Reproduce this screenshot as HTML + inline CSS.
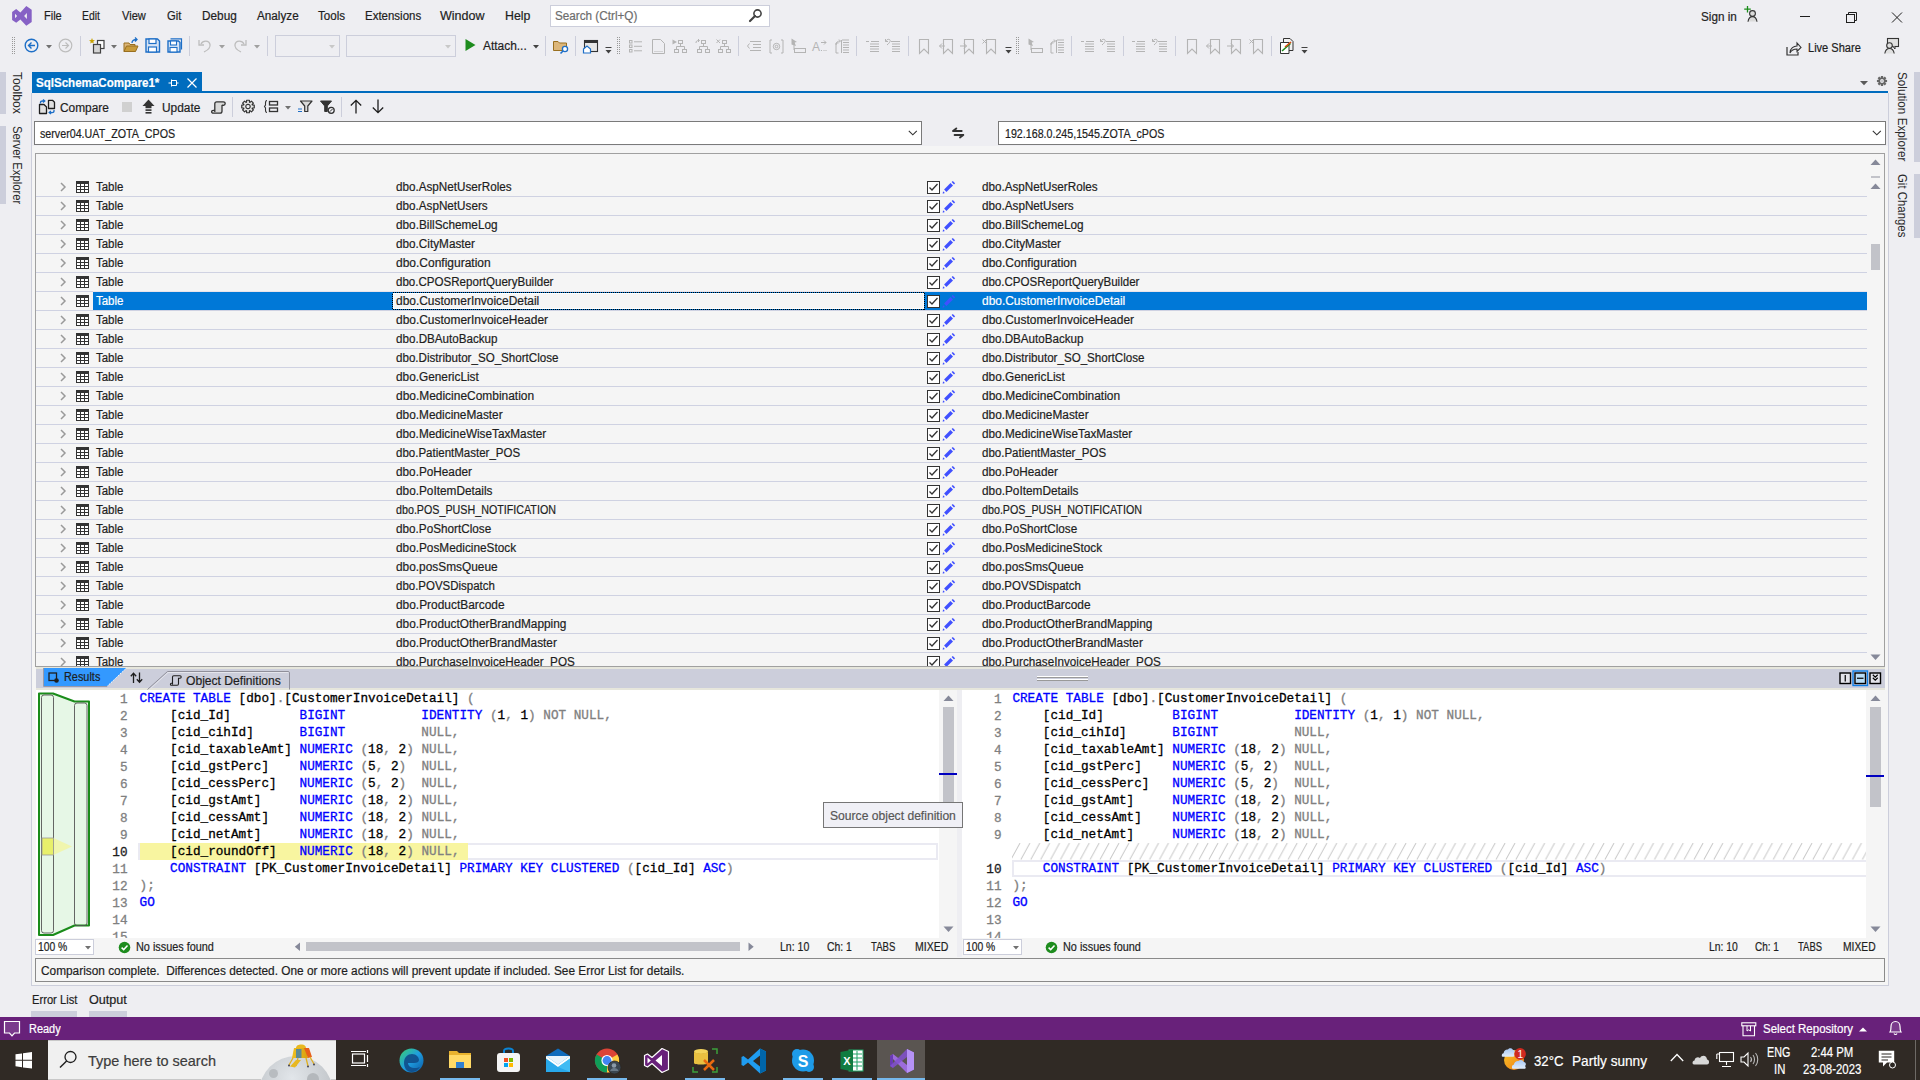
<!DOCTYPE html><html><head><meta charset="utf-8"><style>
*{margin:0;padding:0}
html,body{width:1920px;height:1080px;overflow:hidden;background:#EEEEF2}
body{position:relative;font-family:'Liberation Sans',sans-serif;font-size:12px;color:#1E1E1E}
.a{position:absolute}
.t{position:absolute;white-space:pre;font-size:12px;line-height:20px;-webkit-text-stroke:0.2px currentColor}
.c{-webkit-text-stroke:0.3px currentColor;position:absolute;white-space:pre;font-family:'Liberation Mono',monospace;font-size:12.695px;line-height:17px;height:17px}
svg{overflow:visible}
</style></head><body>
<svg class="a" style="left:8px;top:2px;" width="30" height="28" viewBox="0 0 30 28"><path fill="#8661C5" d="M18.3 3.9 L23.7 7.8 L23.7 20 L18.3 23.7 L12.4 17.6 L8.2 20.7 L4.1 17.9 L4.1 10.1 L8.2 7 L12.4 10.4 Z M7 11.7 L7 16.2 L9.1 14.1 Z M18.9 11 L16.1 14.1 L18.9 17 Z"/></svg>
<div class="t" style="left:44.1px;top:6px;font-size:12px;line-height:20px;color:#1E1E1E;font-family:'Liberation Sans',sans-serif;transform-origin:0 0;transform:scaleX(0.9166);">File</div>
<div class="t" style="left:82.2px;top:6px;font-size:12px;line-height:20px;color:#1E1E1E;font-family:'Liberation Sans',sans-serif;transform-origin:0 0;transform:scaleX(0.8658);">Edit</div>
<div class="t" style="left:121.5px;top:6px;font-size:12px;line-height:20px;color:#1E1E1E;font-family:'Liberation Sans',sans-serif;transform-origin:0 0;transform:scaleX(0.9239);">View</div>
<div class="t" style="left:166.9px;top:6px;font-size:12px;line-height:20px;color:#1E1E1E;font-family:'Liberation Sans',sans-serif;transform-origin:0 0;transform:scaleX(0.9343);">Git</div>
<div class="t" style="left:201.5px;top:6px;font-size:12px;line-height:20px;color:#1E1E1E;font-family:'Liberation Sans',sans-serif;transform-origin:0 0;transform:scaleX(0.9824);">Debug</div>
<div class="t" style="left:256.5px;top:6px;font-size:12px;line-height:20px;color:#1E1E1E;font-family:'Liberation Sans',sans-serif;transform-origin:0 0;transform:scaleX(0.9754);">Analyze</div>
<div class="t" style="left:317.8px;top:6px;font-size:12px;line-height:20px;color:#1E1E1E;font-family:'Liberation Sans',sans-serif;transform-origin:0 0;transform:scaleX(0.9654);">Tools</div>
<div class="t" style="left:364.5px;top:6px;font-size:12px;line-height:20px;color:#1E1E1E;font-family:'Liberation Sans',sans-serif;transform-origin:0 0;transform:scaleX(0.9564);">Extensions</div>
<div class="t" style="left:440.3px;top:6px;font-size:12px;line-height:20px;color:#1E1E1E;font-family:'Liberation Sans',sans-serif;transform-origin:0 0;transform:scaleX(1.0442);">Window</div>
<div class="t" style="left:504.5px;top:6px;font-size:12px;line-height:20px;color:#1E1E1E;font-family:'Liberation Sans',sans-serif;transform-origin:0 0;transform:scaleX(1.0276);">Help</div>
<div class="a" style="left:550px;top:5px;width:220px;height:22px;background:#FFFFFF;border:1px solid #CCCEDB;box-sizing:border-box;"></div>
<div class="t" style="left:555px;top:6px;font-size:12px;line-height:20px;color:#6D6D6D;font-family:'Liberation Sans',sans-serif;transform-origin:0 0;transform:scaleX(0.9762);">Search (Ctrl+Q)</div>
<svg class="a" style="left:748px;top:8px;" width="16" height="15" viewBox="0 0 16 15"><circle cx="9.5" cy="5.5" r="3.6" fill="none" stroke="#424242" stroke-width="1.6"/><line x1="7" y1="8" x2="2" y2="13" stroke="#424242" stroke-width="2.2" stroke-linecap="round"/></svg>
<div class="t" style="left:1701px;top:7px;font-size:12px;line-height:20px;color:#1E1E1E;font-family:'Liberation Sans',sans-serif;transform-origin:0 0;transform:scaleX(0.9768);">Sign in</div>
<svg class="a" style="left:1742px;top:6px;" width="18" height="18" viewBox="0 0 18 18"><path d="M6 15.5 C6.5 11.5 8.5 10.5 10.5 10.5 C12.5 10.5 14.5 11.5 15 15.5 Z" fill="#DADADA"/><circle cx="10.5" cy="7.5" r="2.9" fill="#DADADA" stroke="#333" stroke-width="1.1"/><path d="M6 15.8 C6.5 11.8 8.5 10.6 10.5 10.6 C12.5 10.6 14.5 11.8 15 15.8" fill="none" stroke="#333" stroke-width="1.1"/><path d="M5.5 0 V6.5 M2.2 3.2 H8.8" stroke="#1A8C1A" stroke-width="1.3"/></svg>
<div class="a" style="left:1800px;top:16px;width:10px;height:1px;background:#1E1E1E;"></div>
<svg class="a" style="left:1844px;top:10px;" width="14" height="14" viewBox="0 0 14 14"><rect x="2.5" y="4.5" width="8" height="8" fill="none" stroke="#1E1E1E"/><path d="M4.5 4.5 V2.5 H12.5 V10.5 H10.5" fill="none" stroke="#1E1E1E"/></svg>
<svg class="a" style="left:1890px;top:11px;" width="14" height="13" viewBox="0 0 14 13"><path d="M2 1.5 L12 11.5 M12 1.5 L2 11.5" stroke="#1E1E1E" stroke-width="1"/></svg>
<svg class="a" style="left:12px;top:37px;" width="4" height="17" viewBox="0 0 4 17"><rect x="0" y="0" width="1" height="1" fill="#999"/><rect x="2" y="0" width="1" height="1" fill="#999"/><rect x="0" y="2" width="1" height="1" fill="#999"/><rect x="2" y="2" width="1" height="1" fill="#999"/><rect x="0" y="4" width="1" height="1" fill="#999"/><rect x="2" y="4" width="1" height="1" fill="#999"/><rect x="0" y="6" width="1" height="1" fill="#999"/><rect x="2" y="6" width="1" height="1" fill="#999"/><rect x="0" y="8" width="1" height="1" fill="#999"/><rect x="2" y="8" width="1" height="1" fill="#999"/><rect x="0" y="10" width="1" height="1" fill="#999"/><rect x="2" y="10" width="1" height="1" fill="#999"/><rect x="0" y="12" width="1" height="1" fill="#999"/><rect x="2" y="12" width="1" height="1" fill="#999"/><rect x="0" y="14" width="1" height="1" fill="#999"/><rect x="2" y="14" width="1" height="1" fill="#999"/><rect x="0" y="16" width="1" height="1" fill="#999"/><rect x="2" y="16" width="1" height="1" fill="#999"/></svg>
<svg class="a" style="left:24px;top:38px;" width="15" height="15" viewBox="0 0 15 15"><circle cx="7.5" cy="7.5" r="6.3" fill="none" stroke="#1E6FC7" stroke-width="1.4"/><path d="M11 7.5 H4.5 M7.5 4.5 L4.5 7.5 L7.5 10.5" fill="none" stroke="#1E6FC7" stroke-width="1.4"/></svg>
<svg class="a" style="left:46px;top:45px;" width="7" height="4" viewBox="0 0 7 4"><path d="M0 0 H6 L3 3.5 Z" fill="#717171"/></svg>
<svg class="a" style="left:58px;top:38px;" width="15" height="15" viewBox="0 0 15 15"><circle cx="7.5" cy="7.5" r="6.3" fill="none" stroke="#BDBDBD" stroke-width="1.2"/><path d="M4 7.5 H10.5 M7.5 4.5 L10.5 7.5 L7.5 10.5" fill="none" stroke="#BDBDBD" stroke-width="1.2"/></svg>
<div class="a" style="left:80px;top:36px;width:1px;height:20px;background:#CCCEDB;"></div>
<svg class="a" style="left:88px;top:37px;" width="18" height="18" viewBox="0 0 18 18"><path d="M4 1 L4.8 3 L7 3.2 L5.3 4.5 L5.8 6.5 L4 5.4 L2.2 6.5 L2.7 4.5 L1 3.2 L3.2 3 Z" fill="#C8A200"/><rect x="9.5" y="3.5" width="6.5" height="8" fill="#FFF" stroke="#424242" stroke-width="1.2"/><rect x="5.5" y="7.5" width="7" height="8.5" fill="#D4D4D4" stroke="#424242" stroke-width="1.2"/></svg>
<svg class="a" style="left:111px;top:45px;" width="7" height="4" viewBox="0 0 7 4"><path d="M0 0 H6 L3 3.5 Z" fill="#717171"/></svg>
<svg class="a" style="left:123px;top:37px;" width="17" height="16" viewBox="0 0 17 16"><path d="M1 6 H6 L7 7.5 H12 V14.5 H1 Z" fill="#DCB67A" stroke="#996F1F" stroke-width="1"/><path d="M1 14.5 L3.5 9 H15 L12.5 14.5 Z" fill="#C89B3C" stroke="#996F1F"/><path d="M9 6 C9 3.5 11 2.5 13.5 2.5 M12 0.5 L14 2.5 L12 4.5" fill="none" stroke="#1E6FC7" stroke-width="1.3"/></svg>
<svg class="a" style="left:145px;top:38px;" width="16" height="15" viewBox="0 0 16 15"><path d="M1 1 H12.5 L14.5 3 V14 H1 Z" fill="#D6E4F5" stroke="#1E6FC7" stroke-width="1.4"/><rect x="4" y="1" width="7" height="4.5" fill="#FFF" stroke="#1E6FC7" stroke-width="1.2"/><rect x="3.5" y="9" width="8" height="5" fill="#FFF" stroke="#1E6FC7" stroke-width="1.2"/></svg>
<svg class="a" style="left:167px;top:38px;" width="16" height="15" viewBox="0 0 16 15"><path d="M3.5 0.8 H14.5 V11.5" fill="none" stroke="#1E6FC7" stroke-width="1.2"/><path d="M1 3 H11.5 L13 4.5 V14 H1 Z" fill="#D6E4F5" stroke="#1E6FC7" stroke-width="1.4"/><rect x="3.5" y="3" width="6" height="4" fill="#FFF" stroke="#1E6FC7" stroke-width="1.1"/><rect x="3" y="9.5" width="7" height="4.5" fill="#FFF" stroke="#1E6FC7" stroke-width="1.1"/></svg>
<div class="a" style="left:189px;top:36px;width:1px;height:20px;background:#CCCEDB;"></div>
<svg class="a" style="left:198px;top:38px;" width="14" height="15" viewBox="0 0 14 15"><path d="M3 6 C5 2 11 2 12 6.5 C12.5 9 10 12 6 14" fill="none" stroke="#BDBDBD" stroke-width="1.3"/><path d="M1 2 V7 H6" fill="none" stroke="#BDBDBD" stroke-width="1.3"/></svg>
<svg class="a" style="left:219px;top:45px;" width="7" height="4" viewBox="0 0 7 4"><path d="M0 0 H6 L3 3.5 Z" fill="#A0A0A0"/></svg>
<svg class="a" style="left:233px;top:38px;" width="14" height="15" viewBox="0 0 14 15"><path d="M11 6 C9 2 3 2 2 6.5 C1.5 9 4 12 8 14" fill="none" stroke="#BDBDBD" stroke-width="1.3"/><path d="M13 2 V7 H8" fill="none" stroke="#BDBDBD" stroke-width="1.3"/></svg>
<svg class="a" style="left:254px;top:45px;" width="7" height="4" viewBox="0 0 7 4"><path d="M0 0 H6 L3 3.5 Z" fill="#A0A0A0"/></svg>
<div class="a" style="left:267px;top:36px;width:1px;height:20px;background:#CCCEDB;"></div>
<div class="a" style="left:275px;top:35px;width:65px;height:22px;border:1px solid #CCCEDB;box-sizing:border-box;"></div>
<svg class="a" style="left:329px;top:45px;" width="7" height="4" viewBox="0 0 7 4"><path d="M0 0 H6 L3 3.5 Z" fill="#C8C8C8"/></svg>
<div class="a" style="left:346px;top:35px;width:110px;height:22px;border:1px solid #CCCEDB;box-sizing:border-box;"></div>
<svg class="a" style="left:445px;top:45px;" width="7" height="4" viewBox="0 0 7 4"><path d="M0 0 H6 L3 3.5 Z" fill="#C8C8C8"/></svg>
<svg class="a" style="left:465px;top:38px;" width="11" height="14" viewBox="0 0 11 14"><path d="M0.5 1 L10.5 7 L0.5 13 Z" fill="#1E8C1E"/></svg>
<div class="t" style="left:483px;top:36px;font-size:12px;line-height:20px;color:#1E1E1E;font-family:'Liberation Sans',sans-serif;transform-origin:0 0;transform:scaleX(0.9938);">Attach...</div>
<svg class="a" style="left:533px;top:45px;" width="7" height="4" viewBox="0 0 7 4"><path d="M0 0 H6 L3 3.5 Z" fill="#424242"/></svg>
<div class="a" style="left:545px;top:36px;width:1px;height:20px;background:#CCCEDB;"></div>
<svg class="a" style="left:553px;top:39px;" width="17" height="15" viewBox="0 0 17 15"><path d="M0.5 2.5 H5 L6.5 4 H13.5 V11.5 H0.5 Z" fill="#DCB67A" stroke="#996F1F"/><circle cx="12" cy="10" r="2.6" fill="#FFF" stroke="#1E6FC7" stroke-width="1.3"/><path d="M10 12 L7.5 14.5" stroke="#1E6FC7" stroke-width="1.6"/></svg>
<div class="a" style="left:575px;top:36px;width:1px;height:20px;background:#CCCEDB;"></div>
<svg class="a" style="left:583px;top:39px;" width="16" height="15" viewBox="0 0 16 15"><rect x="1.5" y="1.5" width="13" height="11" fill="#E6E6E6" stroke="#333" stroke-width="1.1"/><rect x="1.5" y="1.5" width="13" height="2.5" fill="#333"/><path d="M0.5 10 L4 7 L7.5 10 V14 H0.5 Z" fill="#FFF" stroke="#1E6FC7" stroke-width="1.2"/></svg>
<svg class="a" style="left:605px;top:47px;" width="8" height="8" viewBox="0 0 8 8"><rect x="0.5" y="0" width="6" height="1" fill="#424242"/><path d="M0.5 3 H6.5 L3.5 6.5 Z" fill="#424242"/></svg>
<svg class="a" style="left:617px;top:37px;" width="4" height="17" viewBox="0 0 4 17"><rect x="0" y="0" width="1" height="1" fill="#999"/><rect x="2" y="0" width="1" height="1" fill="#999"/><rect x="0" y="2" width="1" height="1" fill="#999"/><rect x="2" y="2" width="1" height="1" fill="#999"/><rect x="0" y="4" width="1" height="1" fill="#999"/><rect x="2" y="4" width="1" height="1" fill="#999"/><rect x="0" y="6" width="1" height="1" fill="#999"/><rect x="2" y="6" width="1" height="1" fill="#999"/><rect x="0" y="8" width="1" height="1" fill="#999"/><rect x="2" y="8" width="1" height="1" fill="#999"/><rect x="0" y="10" width="1" height="1" fill="#999"/><rect x="2" y="10" width="1" height="1" fill="#999"/><rect x="0" y="12" width="1" height="1" fill="#999"/><rect x="2" y="12" width="1" height="1" fill="#999"/><rect x="0" y="14" width="1" height="1" fill="#999"/><rect x="2" y="14" width="1" height="1" fill="#999"/><rect x="0" y="16" width="1" height="1" fill="#999"/><rect x="2" y="16" width="1" height="1" fill="#999"/></svg>
<svg class="a" style="left:629px;top:40px;" width="14" height="13" viewBox="0 0 14 13"><g fill="none" stroke="#B4B4B4" stroke-width="1"><rect x="0.5" y="0.5" width="2.5" height="2.5"/><rect x="0.5" y="5" width="2.5" height="2.5"/><rect x="0.5" y="9.5" width="2.5" height="2.5"/><path d="M5 1.8 H13 M5 6.3 H13 M5 10.8 H13"/></g></svg>
<svg class="a" style="left:652px;top:39px;" width="13" height="15" viewBox="0 0 13 15"><path d="M0.5 0.5 H8.5 L12.5 4.5 V14.5 H0.5 Z" fill="none" stroke="#B4B4B4"/><path d="M2.5 12.5 H11" stroke="#B4B4B4" stroke-dasharray="1 1"/></svg>
<svg class="a" style="left:672px;top:39px;" width="17" height="15" viewBox="0 0 17 15"><path d="M0.5 0.5 L5 3 L0.5 5.5 Z" fill="#B4B4B4"/><g fill="none" stroke="#B4B4B4"><rect x="6.5" y="1.5" width="4" height="3"/><rect x="2.5" y="10.5" width="4" height="3"/><rect x="10.5" y="10.5" width="4" height="3"/><path d="M8.5 4.5 V7.5 M4.5 10.5 V7.5 H12.5 V10.5"/></g></svg>
<svg class="a" style="left:695px;top:39px;" width="17" height="15" viewBox="0 0 17 15"><path d="M1 4 C1 2 2 1.5 4 1.5 M3 0 L4.5 1.5 L3 3" fill="none" stroke="#B4B4B4"/><g fill="none" stroke="#B4B4B4"><rect x="6.5" y="1.5" width="4" height="3"/><rect x="2.5" y="10.5" width="4" height="3"/><rect x="10.5" y="10.5" width="4" height="3"/><path d="M8.5 4.5 V7.5 M4.5 10.5 V7.5 H12.5 V10.5"/></g></svg>
<svg class="a" style="left:716px;top:39px;" width="17" height="15" viewBox="0 0 17 15"><path d="M0.5 0.5 L4 4 M4 0.5 L0.5 4" stroke="#B4B4B4"/><g fill="none" stroke="#B4B4B4"><rect x="6.5" y="1.5" width="4" height="3"/><rect x="2.5" y="10.5" width="4" height="3"/><rect x="10.5" y="10.5" width="4" height="3"/><path d="M8.5 4.5 V7.5 M4.5 10.5 V7.5 H12.5 V10.5"/></g></svg>
<div class="a" style="left:738px;top:36px;width:1px;height:20px;background:#CCCEDB;"></div>
<svg class="a" style="left:747px;top:40px;" width="15" height="13" viewBox="0 0 15 13"><g fill="none" stroke="#B4B4B4"><path d="M3 1.5 H14 M6 4.5 H14 M6 7.5 H14 M3 10.5 H14 M2.5 3.5 L0.5 6 L2.5 8.5"/></g></svg>
<svg class="a" style="left:769px;top:39px;" width="15" height="15" viewBox="0 0 15 15"><g fill="none" stroke="#B4B4B4"><path d="M3 1 H1 V14 H3 M12 1 H14 V14 H12"/><circle cx="7.5" cy="7.5" r="3.2"/><circle cx="7.5" cy="7.5" r="1.3"/></g></svg>
<svg class="a" style="left:791px;top:38px;" width="16" height="16" viewBox="0 0 16 16"><path d="M0.5 0.5 L6 4 L3.5 4.5 L5 8 L0.5 6.5 Z" fill="#B4B4B4"/><rect x="3.5" y="10.5" width="11" height="4" fill="none" stroke="#B4B4B4"/><path d="M3 4 V12" stroke="#B4B4B4"/></svg>
<svg class="a" style="left:812px;top:39px;" width="15" height="15" viewBox="0 0 15 15"><text x="0" y="12" font-family="Liberation Sans" font-size="12" fill="#B4B4B4">A</text><path d="M9 3.5 H14 M12 1.5 L14 3.5 L12 5.5 M9 11.5 H10 M11.5 11.5 H12.5 M13.5 11.5 H14.5" fill="none" stroke="#B4B4B4"/></svg>
<svg class="a" style="left:835px;top:39px;" width="15" height="15" viewBox="0 0 15 15"><g fill="none" stroke="#B4B4B4"><path d="M3.5 14 H1 V4 H3.5"/><path d="M1 6 C1 3 3 2 5 2 M4 0.5 L5.5 2 L4 3.5"/><path d="M7 1 H14 M8 3.5 H14 M8 6 H14 M8 8.5 H14 M8 11 H14 M8 13.5 H14 M6.5 1 V14"/></g></svg>
<div class="a" style="left:856px;top:36px;width:1px;height:20px;background:#CCCEDB;"></div>
<svg class="a" style="left:866px;top:39px;" width="14" height="15" viewBox="0 0 14 15"><g fill="none" stroke="#B4B4B4"><path d="M0 2.5 H3 M4 5 H13 M4 7.5 H13 M4 10 H13 M4 12.5 H13 M5 2.5 H13"/></g></svg>
<svg class="a" style="left:885px;top:38px;" width="16" height="16" viewBox="0 0 16 16"><g fill="none" stroke="#B4B4B4"><path d="M6 3.5 H15 M7 6 H15 M7 8.5 H15 M7 11 H15 M7 13.5 H15"/><path d="M1 4 C1 1.5 3 1 4.5 1.5 C6 2.5 5 4.5 2 7 M0.5 1 V3.5 H3"/></g></svg>
<div class="a" style="left:908px;top:36px;width:1px;height:20px;background:#CCCEDB;"></div>
<svg class="a" style="left:918px;top:39px;" width="15" height="15" viewBox="0 0 15 15"><path d="M1.5 0.5 H10.5 V14.5 L6 10 L1.5 14.5 Z" fill="none" stroke="#B4B4B4" stroke-width="1.1"/></svg>
<svg class="a" style="left:939px;top:39px;" width="15" height="15" viewBox="0 0 15 15"><path d="M0.5 7 H6 M0.5 7 L3 4.5 M0.5 7 L3 9.5" fill="none" stroke="#B4B4B4"/><path d="M4.5 0.5 H13.5 V14.5 L9 10 L4.5 14.5 Z" fill="none" stroke="#B4B4B4" stroke-width="1.1"/></svg>
<svg class="a" style="left:960px;top:39px;" width="15" height="15" viewBox="0 0 15 15"><path d="M0 7 H6.5 M6.5 7 L4 4.5 M6.5 7 L4 9.5" fill="none" stroke="#B4B4B4"/><path d="M4.5 0.5 H13.5 V14.5 L9 10 L4.5 14.5 Z" fill="none" stroke="#B4B4B4" stroke-width="1.1"/></svg>
<svg class="a" style="left:982px;top:39px;" width="15" height="15" viewBox="0 0 15 15"><path d="M0.5 0.5 L4.5 4.5 M4.5 0.5 L0.5 4.5" fill="none" stroke="#B4B4B4"/><path d="M4.5 0.5 H13.5 V14.5 L9 10 L4.5 14.5 Z" fill="none" stroke="#B4B4B4" stroke-width="1.1"/></svg>
<svg class="a" style="left:1005px;top:47px;" width="8" height="8" viewBox="0 0 8 8"><rect x="0.5" y="0" width="6" height="1" fill="#424242"/><path d="M0.5 3 H6.5 L3.5 6.5 Z" fill="#424242"/></svg>
<svg class="a" style="left:1016px;top:37px;" width="4" height="17" viewBox="0 0 4 17"><rect x="0" y="0" width="1" height="1" fill="#999"/><rect x="2" y="0" width="1" height="1" fill="#999"/><rect x="0" y="2" width="1" height="1" fill="#999"/><rect x="2" y="2" width="1" height="1" fill="#999"/><rect x="0" y="4" width="1" height="1" fill="#999"/><rect x="2" y="4" width="1" height="1" fill="#999"/><rect x="0" y="6" width="1" height="1" fill="#999"/><rect x="2" y="6" width="1" height="1" fill="#999"/><rect x="0" y="8" width="1" height="1" fill="#999"/><rect x="2" y="8" width="1" height="1" fill="#999"/><rect x="0" y="10" width="1" height="1" fill="#999"/><rect x="2" y="10" width="1" height="1" fill="#999"/><rect x="0" y="12" width="1" height="1" fill="#999"/><rect x="2" y="12" width="1" height="1" fill="#999"/><rect x="0" y="14" width="1" height="1" fill="#999"/><rect x="2" y="14" width="1" height="1" fill="#999"/><rect x="0" y="16" width="1" height="1" fill="#999"/><rect x="2" y="16" width="1" height="1" fill="#999"/></svg>
<svg class="a" style="left:1028px;top:38px;" width="16" height="16" viewBox="0 0 16 16"><path d="M0.5 0.5 L6 4 L3.5 4.5 L5 8 L0.5 6.5 Z" fill="#B4B4B4"/><rect x="3.5" y="10.5" width="11" height="4" fill="none" stroke="#B4B4B4"/><path d="M3 4 V12" stroke="#B4B4B4"/></svg>
<svg class="a" style="left:1050px;top:39px;" width="15" height="15" viewBox="0 0 15 15"><g fill="none" stroke="#B4B4B4"><path d="M3.5 14 H1 V4 H3.5"/><path d="M1 6 C1 3 3 2 5 2 M4 0.5 L5.5 2 L4 3.5"/><path d="M7 1 H14 M8 3.5 H14 M8 6 H14 M8 8.5 H14 M8 11 H14 M8 13.5 H14 M6.5 1 V14"/></g></svg>
<div class="a" style="left:1071px;top:36px;width:1px;height:20px;background:#CCCEDB;"></div>
<svg class="a" style="left:1081px;top:39px;" width="14" height="15" viewBox="0 0 14 15"><g fill="none" stroke="#B4B4B4"><path d="M0 2.5 H3 M4 5 H13 M4 7.5 H13 M4 10 H13 M4 12.5 H13 M5 2.5 H13"/></g></svg>
<svg class="a" style="left:1100px;top:38px;" width="16" height="16" viewBox="0 0 16 16"><g fill="none" stroke="#B4B4B4"><path d="M6 3.5 H15 M7 6 H15 M7 8.5 H15 M7 11 H15 M7 13.5 H15"/><path d="M1 4 C1 1.5 3 1 4.5 1.5 C6 2.5 5 4.5 2 7 M0.5 1 V3.5 H3"/></g></svg>
<div class="a" style="left:1123px;top:36px;width:1px;height:20px;background:#CCCEDB;"></div>
<svg class="a" style="left:1132px;top:39px;" width="14" height="15" viewBox="0 0 14 15"><g fill="none" stroke="#B4B4B4"><path d="M0 2.5 H3 M4 5 H13 M4 7.5 H13 M4 10 H13 M4 12.5 H13 M5 2.5 H13"/></g></svg>
<svg class="a" style="left:1152px;top:38px;" width="16" height="16" viewBox="0 0 16 16"><g fill="none" stroke="#B4B4B4"><path d="M6 3.5 H15 M7 6 H15 M7 8.5 H15 M7 11 H15 M7 13.5 H15"/><path d="M1 4 C1 1.5 3 1 4.5 1.5 C6 2.5 5 4.5 2 7 M0.5 1 V3.5 H3"/></g></svg>
<div class="a" style="left:1175px;top:36px;width:1px;height:20px;background:#CCCEDB;"></div>
<svg class="a" style="left:1186px;top:39px;" width="15" height="15" viewBox="0 0 15 15"><path d="M1.5 0.5 H10.5 V14.5 L6 10 L1.5 14.5 Z" fill="none" stroke="#B4B4B4" stroke-width="1.1"/></svg>
<svg class="a" style="left:1206px;top:39px;" width="15" height="15" viewBox="0 0 15 15"><path d="M0.5 7 H6 M0.5 7 L3 4.5 M0.5 7 L3 9.5" fill="none" stroke="#B4B4B4"/><path d="M4.5 0.5 H13.5 V14.5 L9 10 L4.5 14.5 Z" fill="none" stroke="#B4B4B4" stroke-width="1.1"/></svg>
<svg class="a" style="left:1227px;top:39px;" width="15" height="15" viewBox="0 0 15 15"><path d="M0 7 H6.5 M6.5 7 L4 4.5 M6.5 7 L4 9.5" fill="none" stroke="#B4B4B4"/><path d="M4.5 0.5 H13.5 V14.5 L9 10 L4.5 14.5 Z" fill="none" stroke="#B4B4B4" stroke-width="1.1"/></svg>
<svg class="a" style="left:1249px;top:39px;" width="15" height="15" viewBox="0 0 15 15"><path d="M0.5 0.5 L4.5 4.5 M4.5 0.5 L0.5 4.5" fill="none" stroke="#B4B4B4"/><path d="M4.5 0.5 H13.5 V14.5 L9 10 L4.5 14.5 Z" fill="none" stroke="#B4B4B4" stroke-width="1.1"/></svg>
<div class="a" style="left:1271px;top:36px;width:1px;height:20px;background:#CCCEDB;"></div>
<svg class="a" style="left:1280px;top:38px;" width="14" height="16" viewBox="0 0 14 16"><path d="M3.5 0.5 H10 L13 3.5 V12.5 H3.5 Z" fill="#F0F0F0" stroke="#333"/><path d="M0.5 4.5 H9 V15.5 H0.5 Z" fill="#FFF" stroke="#333"/><path d="M2 13 L10.5 5.5" stroke="#1E8C1E" stroke-width="1.6"/><path d="M5 9 L11 4" stroke="#D9480F" stroke-width="1.6"/></svg>
<svg class="a" style="left:1301px;top:47px;" width="8" height="8" viewBox="0 0 8 8"><rect x="0.5" y="0" width="6" height="1" fill="#424242"/><path d="M0.5 3 H6.5 L3.5 6.5 Z" fill="#424242"/></svg>
<svg class="a" style="left:1786px;top:41px;" width="16" height="15" viewBox="0 0 16 15"><path d="M1 6 V14 H12 V11" fill="none" stroke="#333" stroke-width="1.2"/><path d="M4 12 C4 7 8 5 11 5 V2 L15 6.5 L11 10.5 V8 C8 8 5.5 9 4 12 Z" fill="none" stroke="#333" stroke-width="1.1"/></svg>
<div class="t" style="left:1807.5px;top:38px;font-size:12px;line-height:20px;color:#1E1E1E;font-family:'Liberation Sans',sans-serif;transform-origin:0 0;transform:scaleX(0.9208);">Live Share</div>
<svg class="a" style="left:1884px;top:38px;" width="16" height="17" viewBox="0 0 16 17"><rect x="3.5" y="0.5" width="11" height="8" fill="#E0E0E0" stroke="#333" stroke-width="1.1"/><path d="M9 8.5 L11 11 V8.5" fill="#E0E0E0" stroke="#333"/><circle cx="5.5" cy="7.5" r="2.8" fill="#E0E0E0" stroke="#333" stroke-width="1.1"/><path d="M0.8 15.5 C1.5 11.5 3.5 10.5 5.5 10.5 C7.5 10.5 9.5 11.5 10.2 15.5" fill="#E0E0E0" stroke="#333" stroke-width="1.1"/></svg>
<div class="a" style="left:0px;top:72px;width:6px;height:42px;background:#CCCEDB;"></div>
<div class="a" style="left:0px;top:126px;width:6px;height:78px;background:#CCCEDB;"></div>
<div class="a" style="left:1914px;top:72px;width:6px;height:90px;background:#CCCEDB;"></div>
<div class="a" style="left:1914px;top:174px;width:6px;height:64px;background:#CCCEDB;"></div>
<div class="a" style="left:32px;top:72px;width:170px;height:21px;background:#006CBE;"></div>
<div class="t" style="left:36px;top:73px;font-size:12px;line-height:20px;color:#FFFFFF;font-family:'Liberation Sans',sans-serif;font-weight:bold;transform-origin:0 0;transform:scaleX(0.9632);">SqlSchemaCompare1*</div>
<svg class="a" style="left:168px;top:78px;" width="11" height="10" viewBox="0 0 11 10"><path d="M0.5 5 H3.5 M3.5 1.5 V8.5 M3.5 2.5 H8.5 V7.5 H3.5 M8.5 5 H10.5" fill="none" stroke="#FFF" stroke-width="1"/></svg>
<svg class="a" style="left:186px;top:78px;" width="12" height="10" viewBox="0 0 12 10"><path d="M1.5 0.5 L10.5 9.5 M10.5 0.5 L1.5 9.5" stroke="#FFF" stroke-width="1.2"/></svg>
<div class="a" style="left:32px;top:91px;width:1856px;height:2px;background:#006CBE;"></div>
<svg class="a" style="left:1860px;top:81px;" width="8" height="5" viewBox="0 0 8 5"><path d="M0 0 H8 L4 4.2 Z" fill="#5A5A5A"/></svg>
<svg class="a" style="left:1876px;top:75px;" width="12" height="12" viewBox="0 0 12 12"><path fill-rule="evenodd" fill="#666" d="M4.82 2.60 L4.89 0.92 L7.11 0.92 L7.18 2.60 L7.57 2.76 L8.80 1.62 L10.38 3.20 L9.24 4.43 L9.40 4.82 L11.08 4.89 L11.08 7.11 L9.40 7.18 L9.24 7.57 L10.38 8.80 L8.80 10.38 L7.57 9.24 L7.18 9.40 L7.11 11.08 L4.89 11.08 L4.82 9.40 L4.43 9.24 L3.20 10.38 L1.62 8.80 L2.76 7.57 L2.60 7.18 L0.92 7.11 L0.92 4.89 L2.60 4.82 L2.76 4.43 L1.62 3.20 L3.20 1.62 L4.43 2.76 Z M4.10 6.00 A1.9 1.9 0 1 0 7.90 6.00 A1.9 1.9 0 1 0 4.10 6.00 Z"/><rect x="5.5" y="5.5" width="1" height="1" fill="#666"/></svg>
<div class="a" style="left:31px;top:93px;width:1px;height:893px;background:#CCCEDB;"></div>
<div class="a" style="left:1888px;top:93px;width:1px;height:893px;background:#CCCEDB;"></div>
<svg class="a" style="left:38px;top:99px;" width="18" height="16" viewBox="0 0 18 16"><path d="M1.5 5.5 H6 L8.5 8 V14.5 H1.5 Z" fill="#E0E0E0" stroke="#1E1E1E" stroke-width="1.3" stroke-linejoin="round"/><path d="M10.5 1.3 H14.5 L16.5 3.3 V9.5 H10.5 Z" fill="#E0E0E0" stroke="#1E1E1E" stroke-width="1.3" stroke-linejoin="round"/><path d="M2.5 4.5 V3.5 C2.5 2.3 3 2 4.5 2 H6.5 M5 0.5 L6.8 2 L5 3.5" fill="none" stroke="#1E6FC7" stroke-width="1.3"/><path d="M16 11 V12 C16 13.2 15.5 13.6 14 13.6 H11.5 M13 12.1 L11.2 13.6 L13 15.1" fill="none" stroke="#1E6FC7" stroke-width="1.3"/></svg>
<div class="t" style="left:59.5px;top:98px;font-size:12px;line-height:20px;color:#1E1E1E;font-family:'Liberation Sans',sans-serif;transform-origin:0 0;transform:scaleX(0.9898);">Compare</div>
<div class="a" style="left:122px;top:102px;width:10px;height:10px;background:#D0D0D0;"></div>
<svg class="a" style="left:142px;top:99px;" width="13" height="16" viewBox="0 0 13 16"><path d="M6.5 0.5 L12.5 7 H0.5 Z" fill="#333"/><rect x="3.5" y="7" width="6" height="2.2" fill="#333"/><rect x="3.5" y="10.3" width="6" height="1.6" fill="#333"/><rect x="3.5" y="13" width="6" height="1.6" fill="#333"/></svg>
<div class="t" style="left:161.5px;top:98px;font-size:12px;line-height:20px;color:#1E1E1E;font-family:'Liberation Sans',sans-serif;transform-origin:0 0;transform:scaleX(0.9911);">Update</div>
<svg class="a" style="left:211px;top:101px;" width="15" height="13" viewBox="0 0 15 13"><path d="M3.8 11 V2.8 C3.8 1.5 4.5 0.8 5.8 0.8 H12.2 C13.3 0.8 14.2 1.6 14.2 2.6 C14.2 3.6 13.4 4.3 12.4 4.3 H11 V10.3 C11 11.5 10.3 12.2 9 12.2 H2.3 C1.2 12.2 0.6 11.6 0.6 10.8 C0.6 10 1.2 9.4 2.3 9.4 H3.8" fill="#DADADA" stroke="#333" stroke-width="1.3" stroke-linejoin="round"/><path d="M11 4.3 H12.4" stroke="#333" stroke-width="1.3"/></svg>
<div class="a" style="left:232px;top:97px;width:1px;height:20px;background:#CCCEDB;"></div>
<svg class="a" style="left:240px;top:99px;" width="16" height="16" viewBox="0 0 16 16"><path fill-rule="evenodd" fill="#E6E6E6" stroke="#333" stroke-width="1.2" stroke-linejoin="round" d="M6.49 3.15 L6.63 1.25 L9.37 1.25 L9.51 3.15 L10.01 3.36 L11.45 2.11 L13.39 4.05 L12.14 5.49 L12.35 5.99 L14.25 6.13 L14.25 8.87 L12.35 9.01 L12.14 9.51 L13.39 10.95 L11.45 12.89 L10.01 11.64 L9.51 11.85 L9.37 13.75 L6.63 13.75 L6.49 11.85 L5.99 11.64 L4.55 12.89 L2.61 10.95 L3.86 9.51 L3.65 9.01 L1.75 8.87 L1.75 6.13 L3.65 5.99 L3.86 5.49 L2.61 4.05 L4.55 2.11 L5.99 3.36 Z M5.80 7.50 A2.2 2.2 0 1 0 10.20 7.50 A2.2 2.2 0 1 0 5.80 7.50 Z"/></svg>
<svg class="a" style="left:264px;top:100px;" width="16" height="13" viewBox="0 0 16 13"><path d="M3 0.5 C1.5 0.5 1.5 1.5 1.5 3 V5 L0.5 6.5 L1.5 8 V10 C1.5 11.5 1.5 12.5 3 12.5" fill="none" stroke="#333" stroke-width="1.1"/><rect x="5.5" y="1.5" width="8" height="3.5" fill="none" stroke="#333" stroke-width="1.3"/><rect x="5.5" y="8" width="8" height="3.5" fill="none" stroke="#333" stroke-width="1.3"/></svg>
<svg class="a" style="left:285px;top:106px;" width="7" height="4" viewBox="0 0 7 4"><path d="M0 0 H6 L3 3.5 Z" fill="#717171"/></svg>
<svg class="a" style="left:298px;top:100px;" width="15" height="14" viewBox="0 0 15 14"><path d="M2.5 1 H14 L9.8 6 V11.5 H6.7 V6 Z" fill="#DADADA" stroke="#333" stroke-width="1.2" stroke-linejoin="round"/><path d="M0 9 H4 M0 11.5 H4" stroke="#1E6FC7" stroke-width="1.1"/></svg>
<svg class="a" style="left:320px;top:100px;" width="15" height="14" viewBox="0 0 15 14"><path d="M0.5 1 H11.5 L7.3 6 V11.5 H4.7 V6 Z" fill="#333" stroke="#333" stroke-width="1" stroke-linejoin="round"/><circle cx="11.2" cy="10.3" r="3" fill="#EEEEF2" stroke="#333" stroke-width="1.3"/><path d="M9.8 11.7 L12.6 8.9" stroke="#333" stroke-width="1"/></svg>
<div class="a" style="left:341px;top:97px;width:1px;height:20px;background:#CCCEDB;"></div>
<svg class="a" style="left:350px;top:99px;" width="12" height="15" viewBox="0 0 12 15"><path d="M6 1.5 V14.5 M0.8 6.5 L6 1.3 L11.2 6.5" fill="none" stroke="#1E1E1E" stroke-width="1.3"/></svg>
<svg class="a" style="left:372px;top:99px;" width="12" height="15" viewBox="0 0 12 15"><path d="M6 0.5 V13.5 M0.8 8.5 L6 13.7 L11.2 8.5" fill="none" stroke="#1E1E1E" stroke-width="1.3"/></svg>
<div class="a" style="left:34px;top:121px;width:888px;height:24px;background:#FFFFFF;border:1px solid #7A7A7A;box-sizing:border-box;"></div>
<div class="t" style="left:40.2px;top:124px;font-size:12px;line-height:20px;color:#1E1E1E;font-family:'Liberation Sans',sans-serif;transform-origin:0 0;transform:scaleX(0.8913);">server04.UAT_ZOTA_CPOS</div>
<svg class="a" style="left:908px;top:130px;" width="10" height="7" viewBox="0 0 10 7"><path d="M0.8 0.8 L4.8 4.8 L8.8 0.8" fill="none" stroke="#333" stroke-width="1.1"/></svg>
<svg class="a" style="left:950px;top:126px;" width="16" height="14" viewBox="0 0 16 14"><path d="M3 5 H11.7 M3 5 L6.3 2.4 M4.6 9 H13.3 M13.3 9 L10 11.4" fill="none" stroke="#333" stroke-width="1.9" stroke-linecap="round" stroke-linejoin="round"/></svg>
<div class="a" style="left:998px;top:121px;width:888px;height:24px;background:#FFFFFF;border:1px solid #7A7A7A;box-sizing:border-box;"></div>
<div class="t" style="left:1005px;top:124px;font-size:12px;line-height:20px;color:#1E1E1E;font-family:'Liberation Sans',sans-serif;transform-origin:0 0;transform:scaleX(0.8889);">192.168.0.245,1545.ZOTA_cPOS</div>
<svg class="a" style="left:1872px;top:130px;" width="10" height="7" viewBox="0 0 10 7"><path d="M0.8 0.8 L4.8 4.8 L8.8 0.8" fill="none" stroke="#333" stroke-width="1.1"/></svg>
<div class="a" style="left:32px;top:146px;width:1856px;height:840px;background:#F5F5F5;"></div>
<div class="a" style="left:35px;top:153px;width:1850px;height:514px;background:#F5F5F5;border:1px solid #A0A0A0;box-sizing:border-box;"></div>
<div class="a" style="left:36px;top:154px;width:1848px;height:512px;overflow:hidden">
<svg class="a" style="left:24px;top:28px" width="7" height="10" viewBox="0 0 7 10"><path d="M1 1 L5 5 L1 9" fill="none" stroke="#9A9A9A" stroke-width="1.5"/></svg>
<svg class="a" style="left:40px;top:27px" width="13" height="12" viewBox="0 0 13 12"><rect x="0" y="0" width="13" height="12" fill="#333"/><rect x="1" y="3" width="3" height="2" fill="#FFF"/><rect x="5" y="3" width="3" height="2" fill="#FFF"/><rect x="9" y="3" width="3" height="2" fill="#FFF"/><rect x="1" y="6" width="3" height="2" fill="#FFF"/><rect x="5" y="6" width="3" height="2" fill="#FFF"/><rect x="9" y="6" width="3" height="2" fill="#FFF"/><rect x="1" y="9" width="3" height="2" fill="#FFF"/><rect x="5" y="9" width="3" height="2" fill="#FFF"/><rect x="9" y="9" width="3" height="2" fill="#FFF"/></svg>
<div class="t" style="left:60px;top:23px;color:#1E1E1E;transform-origin:0 0;transform:scaleX(0.955);">Table</div>
<div class="t" style="left:359.5px;top:23px;color:#1E1E1E;transform-origin:0 0;transform:scaleX(0.9734048508935857);">dbo.AspNetUserRoles</div>
<svg class="a" style="left:891px;top:27px" width="13" height="13" viewBox="0 0 13 13"><rect x="0.5" y="0.5" width="12" height="12" fill="#FFF" stroke="#333"/><path d="M2.5 6.5 L5 9 L10.5 3" fill="none" stroke="#333" stroke-width="1.3"/></svg>
<svg class="a" style="left:906px;top:26px" width="14" height="14" viewBox="0 0 14 14"><g fill="#4050FF"><path d="M2.1 9.5 L4.4 12 L11 5.5 L8.5 3 Z"/><path d="M1 11.3 L2.9 13.1 L0.7 13.7 Z"/><path d="M9.6 2 L10.8 0.9 L13.1 3.2 L12 4.4 Z"/></g></svg>
<div class="t" style="left:945.5px;top:23px;color:#1E1E1E;transform-origin:0 0;transform:scaleX(0.9734048508935857);">dbo.AspNetUserRoles</div>
<div class="a" style="left:0px;top:42px;width:1831px;height:1px;background:#CFD2E2;"></div>
<svg class="a" style="left:24px;top:47px" width="7" height="10" viewBox="0 0 7 10"><path d="M1 1 L5 5 L1 9" fill="none" stroke="#9A9A9A" stroke-width="1.5"/></svg>
<svg class="a" style="left:40px;top:46px" width="13" height="12" viewBox="0 0 13 12"><rect x="0" y="0" width="13" height="12" fill="#333"/><rect x="1" y="3" width="3" height="2" fill="#FFF"/><rect x="5" y="3" width="3" height="2" fill="#FFF"/><rect x="9" y="3" width="3" height="2" fill="#FFF"/><rect x="1" y="6" width="3" height="2" fill="#FFF"/><rect x="5" y="6" width="3" height="2" fill="#FFF"/><rect x="9" y="6" width="3" height="2" fill="#FFF"/><rect x="1" y="9" width="3" height="2" fill="#FFF"/><rect x="5" y="9" width="3" height="2" fill="#FFF"/><rect x="9" y="9" width="3" height="2" fill="#FFF"/></svg>
<div class="t" style="left:60px;top:42px;color:#1E1E1E;transform-origin:0 0;transform:scaleX(0.955);">Table</div>
<div class="t" style="left:359.5px;top:42px;color:#1E1E1E;transform-origin:0 0;transform:scaleX(0.9746032821066622);">dbo.AspNetUsers</div>
<svg class="a" style="left:891px;top:46px" width="13" height="13" viewBox="0 0 13 13"><rect x="0.5" y="0.5" width="12" height="12" fill="#FFF" stroke="#333"/><path d="M2.5 6.5 L5 9 L10.5 3" fill="none" stroke="#333" stroke-width="1.3"/></svg>
<svg class="a" style="left:906px;top:45px" width="14" height="14" viewBox="0 0 14 14"><g fill="#4050FF"><path d="M2.1 9.5 L4.4 12 L11 5.5 L8.5 3 Z"/><path d="M1 11.3 L2.9 13.1 L0.7 13.7 Z"/><path d="M9.6 2 L10.8 0.9 L13.1 3.2 L12 4.4 Z"/></g></svg>
<div class="t" style="left:945.5px;top:42px;color:#1E1E1E;transform-origin:0 0;transform:scaleX(0.9746032821066622);">dbo.AspNetUsers</div>
<div class="a" style="left:0px;top:61px;width:1831px;height:1px;background:#CFD2E2;"></div>
<svg class="a" style="left:24px;top:66px" width="7" height="10" viewBox="0 0 7 10"><path d="M1 1 L5 5 L1 9" fill="none" stroke="#9A9A9A" stroke-width="1.5"/></svg>
<svg class="a" style="left:40px;top:65px" width="13" height="12" viewBox="0 0 13 12"><rect x="0" y="0" width="13" height="12" fill="#333"/><rect x="1" y="3" width="3" height="2" fill="#FFF"/><rect x="5" y="3" width="3" height="2" fill="#FFF"/><rect x="9" y="3" width="3" height="2" fill="#FFF"/><rect x="1" y="6" width="3" height="2" fill="#FFF"/><rect x="5" y="6" width="3" height="2" fill="#FFF"/><rect x="9" y="6" width="3" height="2" fill="#FFF"/><rect x="1" y="9" width="3" height="2" fill="#FFF"/><rect x="5" y="9" width="3" height="2" fill="#FFF"/><rect x="9" y="9" width="3" height="2" fill="#FFF"/></svg>
<div class="t" style="left:60px;top:61px;color:#1E1E1E;transform-origin:0 0;transform:scaleX(0.955);">Table</div>
<div class="t" style="left:359.5px;top:61px;color:#1E1E1E;transform-origin:0 0;transform:scaleX(0.9820270710718577);">dbo.BillSchemeLog</div>
<svg class="a" style="left:891px;top:65px" width="13" height="13" viewBox="0 0 13 13"><rect x="0.5" y="0.5" width="12" height="12" fill="#FFF" stroke="#333"/><path d="M2.5 6.5 L5 9 L10.5 3" fill="none" stroke="#333" stroke-width="1.3"/></svg>
<svg class="a" style="left:906px;top:64px" width="14" height="14" viewBox="0 0 14 14"><g fill="#4050FF"><path d="M2.1 9.5 L4.4 12 L11 5.5 L8.5 3 Z"/><path d="M1 11.3 L2.9 13.1 L0.7 13.7 Z"/><path d="M9.6 2 L10.8 0.9 L13.1 3.2 L12 4.4 Z"/></g></svg>
<div class="t" style="left:945.5px;top:61px;color:#1E1E1E;transform-origin:0 0;transform:scaleX(0.9820270710718577);">dbo.BillSchemeLog</div>
<div class="a" style="left:0px;top:80px;width:1831px;height:1px;background:#CFD2E2;"></div>
<svg class="a" style="left:24px;top:85px" width="7" height="10" viewBox="0 0 7 10"><path d="M1 1 L5 5 L1 9" fill="none" stroke="#9A9A9A" stroke-width="1.5"/></svg>
<svg class="a" style="left:40px;top:84px" width="13" height="12" viewBox="0 0 13 12"><rect x="0" y="0" width="13" height="12" fill="#333"/><rect x="1" y="3" width="3" height="2" fill="#FFF"/><rect x="5" y="3" width="3" height="2" fill="#FFF"/><rect x="9" y="3" width="3" height="2" fill="#FFF"/><rect x="1" y="6" width="3" height="2" fill="#FFF"/><rect x="5" y="6" width="3" height="2" fill="#FFF"/><rect x="9" y="6" width="3" height="2" fill="#FFF"/><rect x="1" y="9" width="3" height="2" fill="#FFF"/><rect x="5" y="9" width="3" height="2" fill="#FFF"/><rect x="9" y="9" width="3" height="2" fill="#FFF"/></svg>
<div class="t" style="left:60px;top:80px;color:#1E1E1E;transform-origin:0 0;transform:scaleX(0.955);">Table</div>
<div class="t" style="left:359.5px;top:80px;color:#1E1E1E;transform-origin:0 0;transform:scaleX(0.9789627861948789);">dbo.CityMaster</div>
<svg class="a" style="left:891px;top:84px" width="13" height="13" viewBox="0 0 13 13"><rect x="0.5" y="0.5" width="12" height="12" fill="#FFF" stroke="#333"/><path d="M2.5 6.5 L5 9 L10.5 3" fill="none" stroke="#333" stroke-width="1.3"/></svg>
<svg class="a" style="left:906px;top:83px" width="14" height="14" viewBox="0 0 14 14"><g fill="#4050FF"><path d="M2.1 9.5 L4.4 12 L11 5.5 L8.5 3 Z"/><path d="M1 11.3 L2.9 13.1 L0.7 13.7 Z"/><path d="M9.6 2 L10.8 0.9 L13.1 3.2 L12 4.4 Z"/></g></svg>
<div class="t" style="left:945.5px;top:80px;color:#1E1E1E;transform-origin:0 0;transform:scaleX(0.9789627861948789);">dbo.CityMaster</div>
<div class="a" style="left:0px;top:99px;width:1831px;height:1px;background:#CFD2E2;"></div>
<svg class="a" style="left:24px;top:104px" width="7" height="10" viewBox="0 0 7 10"><path d="M1 1 L5 5 L1 9" fill="none" stroke="#9A9A9A" stroke-width="1.5"/></svg>
<svg class="a" style="left:40px;top:103px" width="13" height="12" viewBox="0 0 13 12"><rect x="0" y="0" width="13" height="12" fill="#333"/><rect x="1" y="3" width="3" height="2" fill="#FFF"/><rect x="5" y="3" width="3" height="2" fill="#FFF"/><rect x="9" y="3" width="3" height="2" fill="#FFF"/><rect x="1" y="6" width="3" height="2" fill="#FFF"/><rect x="5" y="6" width="3" height="2" fill="#FFF"/><rect x="9" y="6" width="3" height="2" fill="#FFF"/><rect x="1" y="9" width="3" height="2" fill="#FFF"/><rect x="5" y="9" width="3" height="2" fill="#FFF"/><rect x="9" y="9" width="3" height="2" fill="#FFF"/></svg>
<div class="t" style="left:60px;top:99px;color:#1E1E1E;transform-origin:0 0;transform:scaleX(0.955);">Table</div>
<div class="t" style="left:359.5px;top:99px;color:#1E1E1E;transform-origin:0 0;transform:scaleX(0.999211977290007);">dbo.Configuration</div>
<svg class="a" style="left:891px;top:103px" width="13" height="13" viewBox="0 0 13 13"><rect x="0.5" y="0.5" width="12" height="12" fill="#FFF" stroke="#333"/><path d="M2.5 6.5 L5 9 L10.5 3" fill="none" stroke="#333" stroke-width="1.3"/></svg>
<svg class="a" style="left:906px;top:102px" width="14" height="14" viewBox="0 0 14 14"><g fill="#4050FF"><path d="M2.1 9.5 L4.4 12 L11 5.5 L8.5 3 Z"/><path d="M1 11.3 L2.9 13.1 L0.7 13.7 Z"/><path d="M9.6 2 L10.8 0.9 L13.1 3.2 L12 4.4 Z"/></g></svg>
<div class="t" style="left:945.5px;top:99px;color:#1E1E1E;transform-origin:0 0;transform:scaleX(0.999211977290007);">dbo.Configuration</div>
<div class="a" style="left:0px;top:118px;width:1831px;height:1px;background:#CFD2E2;"></div>
<svg class="a" style="left:24px;top:123px" width="7" height="10" viewBox="0 0 7 10"><path d="M1 1 L5 5 L1 9" fill="none" stroke="#9A9A9A" stroke-width="1.5"/></svg>
<svg class="a" style="left:40px;top:122px" width="13" height="12" viewBox="0 0 13 12"><rect x="0" y="0" width="13" height="12" fill="#333"/><rect x="1" y="3" width="3" height="2" fill="#FFF"/><rect x="5" y="3" width="3" height="2" fill="#FFF"/><rect x="9" y="3" width="3" height="2" fill="#FFF"/><rect x="1" y="6" width="3" height="2" fill="#FFF"/><rect x="5" y="6" width="3" height="2" fill="#FFF"/><rect x="9" y="6" width="3" height="2" fill="#FFF"/><rect x="1" y="9" width="3" height="2" fill="#FFF"/><rect x="5" y="9" width="3" height="2" fill="#FFF"/><rect x="9" y="9" width="3" height="2" fill="#FFF"/></svg>
<div class="t" style="left:60px;top:118px;color:#1E1E1E;transform-origin:0 0;transform:scaleX(0.955);">Table</div>
<div class="t" style="left:359.5px;top:118px;color:#1E1E1E;transform-origin:0 0;transform:scaleX(0.9634244066030203);">dbo.CPOSReportQueryBuilder</div>
<svg class="a" style="left:891px;top:122px" width="13" height="13" viewBox="0 0 13 13"><rect x="0.5" y="0.5" width="12" height="12" fill="#FFF" stroke="#333"/><path d="M2.5 6.5 L5 9 L10.5 3" fill="none" stroke="#333" stroke-width="1.3"/></svg>
<svg class="a" style="left:906px;top:121px" width="14" height="14" viewBox="0 0 14 14"><g fill="#4050FF"><path d="M2.1 9.5 L4.4 12 L11 5.5 L8.5 3 Z"/><path d="M1 11.3 L2.9 13.1 L0.7 13.7 Z"/><path d="M9.6 2 L10.8 0.9 L13.1 3.2 L12 4.4 Z"/></g></svg>
<div class="t" style="left:945.5px;top:118px;color:#1E1E1E;transform-origin:0 0;transform:scaleX(0.9634244066030203);">dbo.CPOSReportQueryBuilder</div>
<div class="a" style="left:0px;top:137px;width:57px;height:1px;background:#CFD2E2;"></div>
<div class="a" style="left:57px;top:137px;width:1774px;height:1px;background:#E9E3EA;"></div>
<div class="a" style="left:57px;top:138px;width:299px;height:18px;background:#0078D7;"></div>
<div class="a" style="left:889px;top:138px;width:942px;height:18px;background:#0078D7;"></div>
<svg class="a" style="left:356px;top:138px" width="533" height="18" viewBox="0 0 533 18"><rect x="0.5" y="0.5" width="532" height="17" fill="none" stroke="#0078D7"/><rect x="0.5" y="0.5" width="532" height="17" fill="none" stroke="#000" stroke-dasharray="1 1" shape-rendering="crispEdges"/><rect x="1.5" y="1.5" width="530" height="15" fill="none" stroke="#FFF" shape-rendering="crispEdges"/></svg>
<svg class="a" style="left:24px;top:142px" width="7" height="10" viewBox="0 0 7 10"><path d="M1 1 L5 5 L1 9" fill="none" stroke="#9A9A9A" stroke-width="1.5"/></svg>
<svg class="a" style="left:40px;top:141px" width="13" height="12" viewBox="0 0 13 12"><rect x="0" y="0" width="13" height="12" fill="#333"/><rect x="1" y="3" width="3" height="2" fill="#FFF"/><rect x="5" y="3" width="3" height="2" fill="#FFF"/><rect x="9" y="3" width="3" height="2" fill="#FFF"/><rect x="1" y="6" width="3" height="2" fill="#FFF"/><rect x="5" y="6" width="3" height="2" fill="#FFF"/><rect x="9" y="6" width="3" height="2" fill="#FFF"/><rect x="1" y="9" width="3" height="2" fill="#FFF"/><rect x="5" y="9" width="3" height="2" fill="#FFF"/><rect x="9" y="9" width="3" height="2" fill="#FFF"/></svg>
<div class="t" style="left:60px;top:137px;color:#FFFFFF;transform-origin:0 0;transform:scaleX(0.955);">Table</div>
<div class="t" style="left:359.5px;top:137px;color:#1E1E1E;transform-origin:0 0;transform:scaleX(0.9939467422188484);">dbo.CustomerInvoiceDetail</div>
<svg class="a" style="left:891px;top:141px" width="13" height="13" viewBox="0 0 13 13"><rect x="0.5" y="0.5" width="12" height="12" fill="#FFF" stroke="#333"/><path d="M2.5 6.5 L5 9 L10.5 3" fill="none" stroke="#333" stroke-width="1.3"/></svg>
<svg class="a" style="left:906px;top:140px" width="14" height="14" viewBox="0 0 14 14"><g fill="#4050FF"><path d="M2.1 9.5 L4.4 12 L11 5.5 L8.5 3 Z"/><path d="M1 11.3 L2.9 13.1 L0.7 13.7 Z"/><path d="M9.6 2 L10.8 0.9 L13.1 3.2 L12 4.4 Z"/></g></svg>
<div class="t" style="left:945.5px;top:137px;color:#FFFFFF;transform-origin:0 0;transform:scaleX(0.9939467422188484);">dbo.CustomerInvoiceDetail</div>
<div class="a" style="left:0px;top:156px;width:57px;height:1px;background:#CFD2E2;"></div>
<div class="a" style="left:57px;top:156px;width:1774px;height:1px;background:#CFD2E2;"></div>
<svg class="a" style="left:24px;top:161px" width="7" height="10" viewBox="0 0 7 10"><path d="M1 1 L5 5 L1 9" fill="none" stroke="#9A9A9A" stroke-width="1.5"/></svg>
<svg class="a" style="left:40px;top:160px" width="13" height="12" viewBox="0 0 13 12"><rect x="0" y="0" width="13" height="12" fill="#333"/><rect x="1" y="3" width="3" height="2" fill="#FFF"/><rect x="5" y="3" width="3" height="2" fill="#FFF"/><rect x="9" y="3" width="3" height="2" fill="#FFF"/><rect x="1" y="6" width="3" height="2" fill="#FFF"/><rect x="5" y="6" width="3" height="2" fill="#FFF"/><rect x="9" y="6" width="3" height="2" fill="#FFF"/><rect x="1" y="9" width="3" height="2" fill="#FFF"/><rect x="5" y="9" width="3" height="2" fill="#FFF"/><rect x="9" y="9" width="3" height="2" fill="#FFF"/></svg>
<div class="t" style="left:60px;top:156px;color:#1E1E1E;transform-origin:0 0;transform:scaleX(0.955);">Table</div>
<div class="t" style="left:359.5px;top:156px;color:#1E1E1E;transform-origin:0 0;transform:scaleX(0.9952790151743749);">dbo.CustomerInvoiceHeader</div>
<svg class="a" style="left:891px;top:160px" width="13" height="13" viewBox="0 0 13 13"><rect x="0.5" y="0.5" width="12" height="12" fill="#FFF" stroke="#333"/><path d="M2.5 6.5 L5 9 L10.5 3" fill="none" stroke="#333" stroke-width="1.3"/></svg>
<svg class="a" style="left:906px;top:159px" width="14" height="14" viewBox="0 0 14 14"><g fill="#4050FF"><path d="M2.1 9.5 L4.4 12 L11 5.5 L8.5 3 Z"/><path d="M1 11.3 L2.9 13.1 L0.7 13.7 Z"/><path d="M9.6 2 L10.8 0.9 L13.1 3.2 L12 4.4 Z"/></g></svg>
<div class="t" style="left:945.5px;top:156px;color:#1E1E1E;transform-origin:0 0;transform:scaleX(0.9952790151743749);">dbo.CustomerInvoiceHeader</div>
<div class="a" style="left:0px;top:175px;width:1831px;height:1px;background:#CFD2E2;"></div>
<svg class="a" style="left:24px;top:180px" width="7" height="10" viewBox="0 0 7 10"><path d="M1 1 L5 5 L1 9" fill="none" stroke="#9A9A9A" stroke-width="1.5"/></svg>
<svg class="a" style="left:40px;top:179px" width="13" height="12" viewBox="0 0 13 12"><rect x="0" y="0" width="13" height="12" fill="#333"/><rect x="1" y="3" width="3" height="2" fill="#FFF"/><rect x="5" y="3" width="3" height="2" fill="#FFF"/><rect x="9" y="3" width="3" height="2" fill="#FFF"/><rect x="1" y="6" width="3" height="2" fill="#FFF"/><rect x="5" y="6" width="3" height="2" fill="#FFF"/><rect x="9" y="6" width="3" height="2" fill="#FFF"/><rect x="1" y="9" width="3" height="2" fill="#FFF"/><rect x="5" y="9" width="3" height="2" fill="#FFF"/><rect x="9" y="9" width="3" height="2" fill="#FFF"/></svg>
<div class="t" style="left:60px;top:175px;color:#1E1E1E;transform-origin:0 0;transform:scaleX(0.955);">Table</div>
<div class="t" style="left:359.5px;top:175px;color:#1E1E1E;transform-origin:0 0;transform:scaleX(0.969279091207447);">dbo.DBAutoBackup</div>
<svg class="a" style="left:891px;top:179px" width="13" height="13" viewBox="0 0 13 13"><rect x="0.5" y="0.5" width="12" height="12" fill="#FFF" stroke="#333"/><path d="M2.5 6.5 L5 9 L10.5 3" fill="none" stroke="#333" stroke-width="1.3"/></svg>
<svg class="a" style="left:906px;top:178px" width="14" height="14" viewBox="0 0 14 14"><g fill="#4050FF"><path d="M2.1 9.5 L4.4 12 L11 5.5 L8.5 3 Z"/><path d="M1 11.3 L2.9 13.1 L0.7 13.7 Z"/><path d="M9.6 2 L10.8 0.9 L13.1 3.2 L12 4.4 Z"/></g></svg>
<div class="t" style="left:945.5px;top:175px;color:#1E1E1E;transform-origin:0 0;transform:scaleX(0.969279091207447);">dbo.DBAutoBackup</div>
<div class="a" style="left:0px;top:194px;width:1831px;height:1px;background:#CFD2E2;"></div>
<svg class="a" style="left:24px;top:199px" width="7" height="10" viewBox="0 0 7 10"><path d="M1 1 L5 5 L1 9" fill="none" stroke="#9A9A9A" stroke-width="1.5"/></svg>
<svg class="a" style="left:40px;top:198px" width="13" height="12" viewBox="0 0 13 12"><rect x="0" y="0" width="13" height="12" fill="#333"/><rect x="1" y="3" width="3" height="2" fill="#FFF"/><rect x="5" y="3" width="3" height="2" fill="#FFF"/><rect x="9" y="3" width="3" height="2" fill="#FFF"/><rect x="1" y="6" width="3" height="2" fill="#FFF"/><rect x="5" y="6" width="3" height="2" fill="#FFF"/><rect x="9" y="6" width="3" height="2" fill="#FFF"/><rect x="1" y="9" width="3" height="2" fill="#FFF"/><rect x="5" y="9" width="3" height="2" fill="#FFF"/><rect x="9" y="9" width="3" height="2" fill="#FFF"/></svg>
<div class="t" style="left:60px;top:194px;color:#1E1E1E;transform-origin:0 0;transform:scaleX(0.955);">Table</div>
<div class="t" style="left:359.5px;top:194px;color:#1E1E1E;transform-origin:0 0;transform:scaleX(0.9667855899905186);">dbo.Distributor_SO_ShortClose</div>
<svg class="a" style="left:891px;top:198px" width="13" height="13" viewBox="0 0 13 13"><rect x="0.5" y="0.5" width="12" height="12" fill="#FFF" stroke="#333"/><path d="M2.5 6.5 L5 9 L10.5 3" fill="none" stroke="#333" stroke-width="1.3"/></svg>
<svg class="a" style="left:906px;top:197px" width="14" height="14" viewBox="0 0 14 14"><g fill="#4050FF"><path d="M2.1 9.5 L4.4 12 L11 5.5 L8.5 3 Z"/><path d="M1 11.3 L2.9 13.1 L0.7 13.7 Z"/><path d="M9.6 2 L10.8 0.9 L13.1 3.2 L12 4.4 Z"/></g></svg>
<div class="t" style="left:945.5px;top:194px;color:#1E1E1E;transform-origin:0 0;transform:scaleX(0.9667855899905186);">dbo.Distributor_SO_ShortClose</div>
<div class="a" style="left:0px;top:213px;width:1831px;height:1px;background:#CFD2E2;"></div>
<svg class="a" style="left:24px;top:218px" width="7" height="10" viewBox="0 0 7 10"><path d="M1 1 L5 5 L1 9" fill="none" stroke="#9A9A9A" stroke-width="1.5"/></svg>
<svg class="a" style="left:40px;top:217px" width="13" height="12" viewBox="0 0 13 12"><rect x="0" y="0" width="13" height="12" fill="#333"/><rect x="1" y="3" width="3" height="2" fill="#FFF"/><rect x="5" y="3" width="3" height="2" fill="#FFF"/><rect x="9" y="3" width="3" height="2" fill="#FFF"/><rect x="1" y="6" width="3" height="2" fill="#FFF"/><rect x="5" y="6" width="3" height="2" fill="#FFF"/><rect x="9" y="6" width="3" height="2" fill="#FFF"/><rect x="1" y="9" width="3" height="2" fill="#FFF"/><rect x="5" y="9" width="3" height="2" fill="#FFF"/><rect x="9" y="9" width="3" height="2" fill="#FFF"/></svg>
<div class="t" style="left:60px;top:213px;color:#1E1E1E;transform-origin:0 0;transform:scaleX(0.955);">Table</div>
<div class="t" style="left:359.5px;top:213px;color:#1E1E1E;transform-origin:0 0;transform:scaleX(0.9848626168832375);">dbo.GenericList</div>
<svg class="a" style="left:891px;top:217px" width="13" height="13" viewBox="0 0 13 13"><rect x="0.5" y="0.5" width="12" height="12" fill="#FFF" stroke="#333"/><path d="M2.5 6.5 L5 9 L10.5 3" fill="none" stroke="#333" stroke-width="1.3"/></svg>
<svg class="a" style="left:906px;top:216px" width="14" height="14" viewBox="0 0 14 14"><g fill="#4050FF"><path d="M2.1 9.5 L4.4 12 L11 5.5 L8.5 3 Z"/><path d="M1 11.3 L2.9 13.1 L0.7 13.7 Z"/><path d="M9.6 2 L10.8 0.9 L13.1 3.2 L12 4.4 Z"/></g></svg>
<div class="t" style="left:945.5px;top:213px;color:#1E1E1E;transform-origin:0 0;transform:scaleX(0.9848626168832375);">dbo.GenericList</div>
<div class="a" style="left:0px;top:232px;width:1831px;height:1px;background:#CFD2E2;"></div>
<svg class="a" style="left:24px;top:237px" width="7" height="10" viewBox="0 0 7 10"><path d="M1 1 L5 5 L1 9" fill="none" stroke="#9A9A9A" stroke-width="1.5"/></svg>
<svg class="a" style="left:40px;top:236px" width="13" height="12" viewBox="0 0 13 12"><rect x="0" y="0" width="13" height="12" fill="#333"/><rect x="1" y="3" width="3" height="2" fill="#FFF"/><rect x="5" y="3" width="3" height="2" fill="#FFF"/><rect x="9" y="3" width="3" height="2" fill="#FFF"/><rect x="1" y="6" width="3" height="2" fill="#FFF"/><rect x="5" y="6" width="3" height="2" fill="#FFF"/><rect x="9" y="6" width="3" height="2" fill="#FFF"/><rect x="1" y="9" width="3" height="2" fill="#FFF"/><rect x="5" y="9" width="3" height="2" fill="#FFF"/><rect x="9" y="9" width="3" height="2" fill="#FFF"/></svg>
<div class="t" style="left:60px;top:232px;color:#1E1E1E;transform-origin:0 0;transform:scaleX(0.955);">Table</div>
<div class="t" style="left:359.5px;top:232px;color:#1E1E1E;transform-origin:0 0;transform:scaleX(0.9950455604977196);">dbo.MedicineCombination</div>
<svg class="a" style="left:891px;top:236px" width="13" height="13" viewBox="0 0 13 13"><rect x="0.5" y="0.5" width="12" height="12" fill="#FFF" stroke="#333"/><path d="M2.5 6.5 L5 9 L10.5 3" fill="none" stroke="#333" stroke-width="1.3"/></svg>
<svg class="a" style="left:906px;top:235px" width="14" height="14" viewBox="0 0 14 14"><g fill="#4050FF"><path d="M2.1 9.5 L4.4 12 L11 5.5 L8.5 3 Z"/><path d="M1 11.3 L2.9 13.1 L0.7 13.7 Z"/><path d="M9.6 2 L10.8 0.9 L13.1 3.2 L12 4.4 Z"/></g></svg>
<div class="t" style="left:945.5px;top:232px;color:#1E1E1E;transform-origin:0 0;transform:scaleX(0.9950455604977196);">dbo.MedicineCombination</div>
<div class="a" style="left:0px;top:251px;width:1831px;height:1px;background:#CFD2E2;"></div>
<svg class="a" style="left:24px;top:256px" width="7" height="10" viewBox="0 0 7 10"><path d="M1 1 L5 5 L1 9" fill="none" stroke="#9A9A9A" stroke-width="1.5"/></svg>
<svg class="a" style="left:40px;top:255px" width="13" height="12" viewBox="0 0 13 12"><rect x="0" y="0" width="13" height="12" fill="#333"/><rect x="1" y="3" width="3" height="2" fill="#FFF"/><rect x="5" y="3" width="3" height="2" fill="#FFF"/><rect x="9" y="3" width="3" height="2" fill="#FFF"/><rect x="1" y="6" width="3" height="2" fill="#FFF"/><rect x="5" y="6" width="3" height="2" fill="#FFF"/><rect x="9" y="6" width="3" height="2" fill="#FFF"/><rect x="1" y="9" width="3" height="2" fill="#FFF"/><rect x="5" y="9" width="3" height="2" fill="#FFF"/><rect x="9" y="9" width="3" height="2" fill="#FFF"/></svg>
<div class="t" style="left:60px;top:251px;color:#1E1E1E;transform-origin:0 0;transform:scaleX(0.955);">Table</div>
<div class="t" style="left:359.5px;top:251px;color:#1E1E1E;transform-origin:0 0;transform:scaleX(0.9869926760848505);">dbo.MedicineMaster</div>
<svg class="a" style="left:891px;top:255px" width="13" height="13" viewBox="0 0 13 13"><rect x="0.5" y="0.5" width="12" height="12" fill="#FFF" stroke="#333"/><path d="M2.5 6.5 L5 9 L10.5 3" fill="none" stroke="#333" stroke-width="1.3"/></svg>
<svg class="a" style="left:906px;top:254px" width="14" height="14" viewBox="0 0 14 14"><g fill="#4050FF"><path d="M2.1 9.5 L4.4 12 L11 5.5 L8.5 3 Z"/><path d="M1 11.3 L2.9 13.1 L0.7 13.7 Z"/><path d="M9.6 2 L10.8 0.9 L13.1 3.2 L12 4.4 Z"/></g></svg>
<div class="t" style="left:945.5px;top:251px;color:#1E1E1E;transform-origin:0 0;transform:scaleX(0.9869926760848505);">dbo.MedicineMaster</div>
<div class="a" style="left:0px;top:270px;width:1831px;height:1px;background:#CFD2E2;"></div>
<svg class="a" style="left:24px;top:275px" width="7" height="10" viewBox="0 0 7 10"><path d="M1 1 L5 5 L1 9" fill="none" stroke="#9A9A9A" stroke-width="1.5"/></svg>
<svg class="a" style="left:40px;top:274px" width="13" height="12" viewBox="0 0 13 12"><rect x="0" y="0" width="13" height="12" fill="#333"/><rect x="1" y="3" width="3" height="2" fill="#FFF"/><rect x="5" y="3" width="3" height="2" fill="#FFF"/><rect x="9" y="3" width="3" height="2" fill="#FFF"/><rect x="1" y="6" width="3" height="2" fill="#FFF"/><rect x="5" y="6" width="3" height="2" fill="#FFF"/><rect x="9" y="6" width="3" height="2" fill="#FFF"/><rect x="1" y="9" width="3" height="2" fill="#FFF"/><rect x="5" y="9" width="3" height="2" fill="#FFF"/><rect x="9" y="9" width="3" height="2" fill="#FFF"/></svg>
<div class="t" style="left:60px;top:270px;color:#1E1E1E;transform-origin:0 0;transform:scaleX(0.955);">Table</div>
<div class="t" style="left:359.5px;top:270px;color:#1E1E1E;transform-origin:0 0;transform:scaleX(0.9794886177507146);">dbo.MedicineWiseTaxMaster</div>
<svg class="a" style="left:891px;top:274px" width="13" height="13" viewBox="0 0 13 13"><rect x="0.5" y="0.5" width="12" height="12" fill="#FFF" stroke="#333"/><path d="M2.5 6.5 L5 9 L10.5 3" fill="none" stroke="#333" stroke-width="1.3"/></svg>
<svg class="a" style="left:906px;top:273px" width="14" height="14" viewBox="0 0 14 14"><g fill="#4050FF"><path d="M2.1 9.5 L4.4 12 L11 5.5 L8.5 3 Z"/><path d="M1 11.3 L2.9 13.1 L0.7 13.7 Z"/><path d="M9.6 2 L10.8 0.9 L13.1 3.2 L12 4.4 Z"/></g></svg>
<div class="t" style="left:945.5px;top:270px;color:#1E1E1E;transform-origin:0 0;transform:scaleX(0.9794886177507146);">dbo.MedicineWiseTaxMaster</div>
<div class="a" style="left:0px;top:289px;width:1831px;height:1px;background:#CFD2E2;"></div>
<svg class="a" style="left:24px;top:294px" width="7" height="10" viewBox="0 0 7 10"><path d="M1 1 L5 5 L1 9" fill="none" stroke="#9A9A9A" stroke-width="1.5"/></svg>
<svg class="a" style="left:40px;top:293px" width="13" height="12" viewBox="0 0 13 12"><rect x="0" y="0" width="13" height="12" fill="#333"/><rect x="1" y="3" width="3" height="2" fill="#FFF"/><rect x="5" y="3" width="3" height="2" fill="#FFF"/><rect x="9" y="3" width="3" height="2" fill="#FFF"/><rect x="1" y="6" width="3" height="2" fill="#FFF"/><rect x="5" y="6" width="3" height="2" fill="#FFF"/><rect x="9" y="6" width="3" height="2" fill="#FFF"/><rect x="1" y="9" width="3" height="2" fill="#FFF"/><rect x="5" y="9" width="3" height="2" fill="#FFF"/><rect x="9" y="9" width="3" height="2" fill="#FFF"/></svg>
<div class="t" style="left:60px;top:289px;color:#1E1E1E;transform-origin:0 0;transform:scaleX(0.955);">Table</div>
<div class="t" style="left:359.5px;top:289px;color:#1E1E1E;transform-origin:0 0;transform:scaleX(0.9589998937486794);">dbo.PatientMaster_POS</div>
<svg class="a" style="left:891px;top:293px" width="13" height="13" viewBox="0 0 13 13"><rect x="0.5" y="0.5" width="12" height="12" fill="#FFF" stroke="#333"/><path d="M2.5 6.5 L5 9 L10.5 3" fill="none" stroke="#333" stroke-width="1.3"/></svg>
<svg class="a" style="left:906px;top:292px" width="14" height="14" viewBox="0 0 14 14"><g fill="#4050FF"><path d="M2.1 9.5 L4.4 12 L11 5.5 L8.5 3 Z"/><path d="M1 11.3 L2.9 13.1 L0.7 13.7 Z"/><path d="M9.6 2 L10.8 0.9 L13.1 3.2 L12 4.4 Z"/></g></svg>
<div class="t" style="left:945.5px;top:289px;color:#1E1E1E;transform-origin:0 0;transform:scaleX(0.9589998937486794);">dbo.PatientMaster_POS</div>
<div class="a" style="left:0px;top:308px;width:1831px;height:1px;background:#CFD2E2;"></div>
<svg class="a" style="left:24px;top:313px" width="7" height="10" viewBox="0 0 7 10"><path d="M1 1 L5 5 L1 9" fill="none" stroke="#9A9A9A" stroke-width="1.5"/></svg>
<svg class="a" style="left:40px;top:312px" width="13" height="12" viewBox="0 0 13 12"><rect x="0" y="0" width="13" height="12" fill="#333"/><rect x="1" y="3" width="3" height="2" fill="#FFF"/><rect x="5" y="3" width="3" height="2" fill="#FFF"/><rect x="9" y="3" width="3" height="2" fill="#FFF"/><rect x="1" y="6" width="3" height="2" fill="#FFF"/><rect x="5" y="6" width="3" height="2" fill="#FFF"/><rect x="9" y="6" width="3" height="2" fill="#FFF"/><rect x="1" y="9" width="3" height="2" fill="#FFF"/><rect x="5" y="9" width="3" height="2" fill="#FFF"/><rect x="9" y="9" width="3" height="2" fill="#FFF"/></svg>
<div class="t" style="left:60px;top:308px;color:#1E1E1E;transform-origin:0 0;transform:scaleX(0.955);">Table</div>
<div class="t" style="left:359.5px;top:308px;color:#1E1E1E;transform-origin:0 0;transform:scaleX(0.9808814818553475);">dbo.PoHeader</div>
<svg class="a" style="left:891px;top:312px" width="13" height="13" viewBox="0 0 13 13"><rect x="0.5" y="0.5" width="12" height="12" fill="#FFF" stroke="#333"/><path d="M2.5 6.5 L5 9 L10.5 3" fill="none" stroke="#333" stroke-width="1.3"/></svg>
<svg class="a" style="left:906px;top:311px" width="14" height="14" viewBox="0 0 14 14"><g fill="#4050FF"><path d="M2.1 9.5 L4.4 12 L11 5.5 L8.5 3 Z"/><path d="M1 11.3 L2.9 13.1 L0.7 13.7 Z"/><path d="M9.6 2 L10.8 0.9 L13.1 3.2 L12 4.4 Z"/></g></svg>
<div class="t" style="left:945.5px;top:308px;color:#1E1E1E;transform-origin:0 0;transform:scaleX(0.9808814818553475);">dbo.PoHeader</div>
<div class="a" style="left:0px;top:327px;width:1831px;height:1px;background:#CFD2E2;"></div>
<svg class="a" style="left:24px;top:332px" width="7" height="10" viewBox="0 0 7 10"><path d="M1 1 L5 5 L1 9" fill="none" stroke="#9A9A9A" stroke-width="1.5"/></svg>
<svg class="a" style="left:40px;top:331px" width="13" height="12" viewBox="0 0 13 12"><rect x="0" y="0" width="13" height="12" fill="#333"/><rect x="1" y="3" width="3" height="2" fill="#FFF"/><rect x="5" y="3" width="3" height="2" fill="#FFF"/><rect x="9" y="3" width="3" height="2" fill="#FFF"/><rect x="1" y="6" width="3" height="2" fill="#FFF"/><rect x="5" y="6" width="3" height="2" fill="#FFF"/><rect x="9" y="6" width="3" height="2" fill="#FFF"/><rect x="1" y="9" width="3" height="2" fill="#FFF"/><rect x="5" y="9" width="3" height="2" fill="#FFF"/><rect x="9" y="9" width="3" height="2" fill="#FFF"/></svg>
<div class="t" style="left:60px;top:327px;color:#1E1E1E;transform-origin:0 0;transform:scaleX(0.955);">Table</div>
<div class="t" style="left:359.5px;top:327px;color:#1E1E1E;transform-origin:0 0;transform:scaleX(0.9838735531263945);">dbo.PoItemDetails</div>
<svg class="a" style="left:891px;top:331px" width="13" height="13" viewBox="0 0 13 13"><rect x="0.5" y="0.5" width="12" height="12" fill="#FFF" stroke="#333"/><path d="M2.5 6.5 L5 9 L10.5 3" fill="none" stroke="#333" stroke-width="1.3"/></svg>
<svg class="a" style="left:906px;top:330px" width="14" height="14" viewBox="0 0 14 14"><g fill="#4050FF"><path d="M2.1 9.5 L4.4 12 L11 5.5 L8.5 3 Z"/><path d="M1 11.3 L2.9 13.1 L0.7 13.7 Z"/><path d="M9.6 2 L10.8 0.9 L13.1 3.2 L12 4.4 Z"/></g></svg>
<div class="t" style="left:945.5px;top:327px;color:#1E1E1E;transform-origin:0 0;transform:scaleX(0.9838735531263945);">dbo.PoItemDetails</div>
<div class="a" style="left:0px;top:346px;width:1831px;height:1px;background:#CFD2E2;"></div>
<svg class="a" style="left:24px;top:351px" width="7" height="10" viewBox="0 0 7 10"><path d="M1 1 L5 5 L1 9" fill="none" stroke="#9A9A9A" stroke-width="1.5"/></svg>
<svg class="a" style="left:40px;top:350px" width="13" height="12" viewBox="0 0 13 12"><rect x="0" y="0" width="13" height="12" fill="#333"/><rect x="1" y="3" width="3" height="2" fill="#FFF"/><rect x="5" y="3" width="3" height="2" fill="#FFF"/><rect x="9" y="3" width="3" height="2" fill="#FFF"/><rect x="1" y="6" width="3" height="2" fill="#FFF"/><rect x="5" y="6" width="3" height="2" fill="#FFF"/><rect x="9" y="6" width="3" height="2" fill="#FFF"/><rect x="1" y="9" width="3" height="2" fill="#FFF"/><rect x="5" y="9" width="3" height="2" fill="#FFF"/><rect x="9" y="9" width="3" height="2" fill="#FFF"/></svg>
<div class="t" style="left:60px;top:346px;color:#1E1E1E;transform-origin:0 0;transform:scaleX(0.955);">Table</div>
<div class="t" style="left:359.5px;top:346px;color:#1E1E1E;transform-origin:0 0;transform:scaleX(0.8928208925239728);">dbo.POS_PUSH_NOTIFICATION</div>
<svg class="a" style="left:891px;top:350px" width="13" height="13" viewBox="0 0 13 13"><rect x="0.5" y="0.5" width="12" height="12" fill="#FFF" stroke="#333"/><path d="M2.5 6.5 L5 9 L10.5 3" fill="none" stroke="#333" stroke-width="1.3"/></svg>
<svg class="a" style="left:906px;top:349px" width="14" height="14" viewBox="0 0 14 14"><g fill="#4050FF"><path d="M2.1 9.5 L4.4 12 L11 5.5 L8.5 3 Z"/><path d="M1 11.3 L2.9 13.1 L0.7 13.7 Z"/><path d="M9.6 2 L10.8 0.9 L13.1 3.2 L12 4.4 Z"/></g></svg>
<div class="t" style="left:945.5px;top:346px;color:#1E1E1E;transform-origin:0 0;transform:scaleX(0.8928208925239728);">dbo.POS_PUSH_NOTIFICATION</div>
<div class="a" style="left:0px;top:365px;width:1831px;height:1px;background:#CFD2E2;"></div>
<svg class="a" style="left:24px;top:370px" width="7" height="10" viewBox="0 0 7 10"><path d="M1 1 L5 5 L1 9" fill="none" stroke="#9A9A9A" stroke-width="1.5"/></svg>
<svg class="a" style="left:40px;top:369px" width="13" height="12" viewBox="0 0 13 12"><rect x="0" y="0" width="13" height="12" fill="#333"/><rect x="1" y="3" width="3" height="2" fill="#FFF"/><rect x="5" y="3" width="3" height="2" fill="#FFF"/><rect x="9" y="3" width="3" height="2" fill="#FFF"/><rect x="1" y="6" width="3" height="2" fill="#FFF"/><rect x="5" y="6" width="3" height="2" fill="#FFF"/><rect x="9" y="6" width="3" height="2" fill="#FFF"/><rect x="1" y="9" width="3" height="2" fill="#FFF"/><rect x="5" y="9" width="3" height="2" fill="#FFF"/><rect x="9" y="9" width="3" height="2" fill="#FFF"/></svg>
<div class="t" style="left:60px;top:365px;color:#1E1E1E;transform-origin:0 0;transform:scaleX(0.955);">Table</div>
<div class="t" style="left:359.5px;top:365px;color:#1E1E1E;transform-origin:0 0;transform:scaleX(0.9770169879121849);">dbo.PoShortClose</div>
<svg class="a" style="left:891px;top:369px" width="13" height="13" viewBox="0 0 13 13"><rect x="0.5" y="0.5" width="12" height="12" fill="#FFF" stroke="#333"/><path d="M2.5 6.5 L5 9 L10.5 3" fill="none" stroke="#333" stroke-width="1.3"/></svg>
<svg class="a" style="left:906px;top:368px" width="14" height="14" viewBox="0 0 14 14"><g fill="#4050FF"><path d="M2.1 9.5 L4.4 12 L11 5.5 L8.5 3 Z"/><path d="M1 11.3 L2.9 13.1 L0.7 13.7 Z"/><path d="M9.6 2 L10.8 0.9 L13.1 3.2 L12 4.4 Z"/></g></svg>
<div class="t" style="left:945.5px;top:365px;color:#1E1E1E;transform-origin:0 0;transform:scaleX(0.9770169879121849);">dbo.PoShortClose</div>
<div class="a" style="left:0px;top:384px;width:1831px;height:1px;background:#CFD2E2;"></div>
<svg class="a" style="left:24px;top:389px" width="7" height="10" viewBox="0 0 7 10"><path d="M1 1 L5 5 L1 9" fill="none" stroke="#9A9A9A" stroke-width="1.5"/></svg>
<svg class="a" style="left:40px;top:388px" width="13" height="12" viewBox="0 0 13 12"><rect x="0" y="0" width="13" height="12" fill="#333"/><rect x="1" y="3" width="3" height="2" fill="#FFF"/><rect x="5" y="3" width="3" height="2" fill="#FFF"/><rect x="9" y="3" width="3" height="2" fill="#FFF"/><rect x="1" y="6" width="3" height="2" fill="#FFF"/><rect x="5" y="6" width="3" height="2" fill="#FFF"/><rect x="9" y="6" width="3" height="2" fill="#FFF"/><rect x="1" y="9" width="3" height="2" fill="#FFF"/><rect x="5" y="9" width="3" height="2" fill="#FFF"/><rect x="9" y="9" width="3" height="2" fill="#FFF"/></svg>
<div class="t" style="left:60px;top:384px;color:#1E1E1E;transform-origin:0 0;transform:scaleX(0.955);">Table</div>
<div class="t" style="left:359.5px;top:384px;color:#1E1E1E;transform-origin:0 0;transform:scaleX(0.9836730099709448);">dbo.PosMedicineStock</div>
<svg class="a" style="left:891px;top:388px" width="13" height="13" viewBox="0 0 13 13"><rect x="0.5" y="0.5" width="12" height="12" fill="#FFF" stroke="#333"/><path d="M2.5 6.5 L5 9 L10.5 3" fill="none" stroke="#333" stroke-width="1.3"/></svg>
<svg class="a" style="left:906px;top:387px" width="14" height="14" viewBox="0 0 14 14"><g fill="#4050FF"><path d="M2.1 9.5 L4.4 12 L11 5.5 L8.5 3 Z"/><path d="M1 11.3 L2.9 13.1 L0.7 13.7 Z"/><path d="M9.6 2 L10.8 0.9 L13.1 3.2 L12 4.4 Z"/></g></svg>
<div class="t" style="left:945.5px;top:384px;color:#1E1E1E;transform-origin:0 0;transform:scaleX(0.9836730099709448);">dbo.PosMedicineStock</div>
<div class="a" style="left:0px;top:403px;width:1831px;height:1px;background:#CFD2E2;"></div>
<svg class="a" style="left:24px;top:408px" width="7" height="10" viewBox="0 0 7 10"><path d="M1 1 L5 5 L1 9" fill="none" stroke="#9A9A9A" stroke-width="1.5"/></svg>
<svg class="a" style="left:40px;top:407px" width="13" height="12" viewBox="0 0 13 12"><rect x="0" y="0" width="13" height="12" fill="#333"/><rect x="1" y="3" width="3" height="2" fill="#FFF"/><rect x="5" y="3" width="3" height="2" fill="#FFF"/><rect x="9" y="3" width="3" height="2" fill="#FFF"/><rect x="1" y="6" width="3" height="2" fill="#FFF"/><rect x="5" y="6" width="3" height="2" fill="#FFF"/><rect x="9" y="6" width="3" height="2" fill="#FFF"/><rect x="1" y="9" width="3" height="2" fill="#FFF"/><rect x="5" y="9" width="3" height="2" fill="#FFF"/><rect x="9" y="9" width="3" height="2" fill="#FFF"/></svg>
<div class="t" style="left:60px;top:403px;color:#1E1E1E;transform-origin:0 0;transform:scaleX(0.955);">Table</div>
<div class="t" style="left:359.5px;top:403px;color:#1E1E1E;transform-origin:0 0;transform:scaleX(0.9889903553531099);">dbo.posSmsQueue</div>
<svg class="a" style="left:891px;top:407px" width="13" height="13" viewBox="0 0 13 13"><rect x="0.5" y="0.5" width="12" height="12" fill="#FFF" stroke="#333"/><path d="M2.5 6.5 L5 9 L10.5 3" fill="none" stroke="#333" stroke-width="1.3"/></svg>
<svg class="a" style="left:906px;top:406px" width="14" height="14" viewBox="0 0 14 14"><g fill="#4050FF"><path d="M2.1 9.5 L4.4 12 L11 5.5 L8.5 3 Z"/><path d="M1 11.3 L2.9 13.1 L0.7 13.7 Z"/><path d="M9.6 2 L10.8 0.9 L13.1 3.2 L12 4.4 Z"/></g></svg>
<div class="t" style="left:945.5px;top:403px;color:#1E1E1E;transform-origin:0 0;transform:scaleX(0.9889903553531099);">dbo.posSmsQueue</div>
<div class="a" style="left:0px;top:422px;width:1831px;height:1px;background:#CFD2E2;"></div>
<svg class="a" style="left:24px;top:427px" width="7" height="10" viewBox="0 0 7 10"><path d="M1 1 L5 5 L1 9" fill="none" stroke="#9A9A9A" stroke-width="1.5"/></svg>
<svg class="a" style="left:40px;top:426px" width="13" height="12" viewBox="0 0 13 12"><rect x="0" y="0" width="13" height="12" fill="#333"/><rect x="1" y="3" width="3" height="2" fill="#FFF"/><rect x="5" y="3" width="3" height="2" fill="#FFF"/><rect x="9" y="3" width="3" height="2" fill="#FFF"/><rect x="1" y="6" width="3" height="2" fill="#FFF"/><rect x="5" y="6" width="3" height="2" fill="#FFF"/><rect x="9" y="6" width="3" height="2" fill="#FFF"/><rect x="1" y="9" width="3" height="2" fill="#FFF"/><rect x="5" y="9" width="3" height="2" fill="#FFF"/><rect x="9" y="9" width="3" height="2" fill="#FFF"/></svg>
<div class="t" style="left:60px;top:422px;color:#1E1E1E;transform-origin:0 0;transform:scaleX(0.955);">Table</div>
<div class="t" style="left:359.5px;top:422px;color:#1E1E1E;transform-origin:0 0;transform:scaleX(0.956166066962363);">dbo.POVSDispatch</div>
<svg class="a" style="left:891px;top:426px" width="13" height="13" viewBox="0 0 13 13"><rect x="0.5" y="0.5" width="12" height="12" fill="#FFF" stroke="#333"/><path d="M2.5 6.5 L5 9 L10.5 3" fill="none" stroke="#333" stroke-width="1.3"/></svg>
<svg class="a" style="left:906px;top:425px" width="14" height="14" viewBox="0 0 14 14"><g fill="#4050FF"><path d="M2.1 9.5 L4.4 12 L11 5.5 L8.5 3 Z"/><path d="M1 11.3 L2.9 13.1 L0.7 13.7 Z"/><path d="M9.6 2 L10.8 0.9 L13.1 3.2 L12 4.4 Z"/></g></svg>
<div class="t" style="left:945.5px;top:422px;color:#1E1E1E;transform-origin:0 0;transform:scaleX(0.956166066962363);">dbo.POVSDispatch</div>
<div class="a" style="left:0px;top:441px;width:1831px;height:1px;background:#CFD2E2;"></div>
<svg class="a" style="left:24px;top:446px" width="7" height="10" viewBox="0 0 7 10"><path d="M1 1 L5 5 L1 9" fill="none" stroke="#9A9A9A" stroke-width="1.5"/></svg>
<svg class="a" style="left:40px;top:445px" width="13" height="12" viewBox="0 0 13 12"><rect x="0" y="0" width="13" height="12" fill="#333"/><rect x="1" y="3" width="3" height="2" fill="#FFF"/><rect x="5" y="3" width="3" height="2" fill="#FFF"/><rect x="9" y="3" width="3" height="2" fill="#FFF"/><rect x="1" y="6" width="3" height="2" fill="#FFF"/><rect x="5" y="6" width="3" height="2" fill="#FFF"/><rect x="9" y="6" width="3" height="2" fill="#FFF"/><rect x="1" y="9" width="3" height="2" fill="#FFF"/><rect x="5" y="9" width="3" height="2" fill="#FFF"/><rect x="9" y="9" width="3" height="2" fill="#FFF"/></svg>
<div class="t" style="left:60px;top:441px;color:#1E1E1E;transform-origin:0 0;transform:scaleX(0.955);">Table</div>
<div class="t" style="left:359.5px;top:441px;color:#1E1E1E;transform-origin:0 0;transform:scaleX(0.9924051511646175);">dbo.ProductBarcode</div>
<svg class="a" style="left:891px;top:445px" width="13" height="13" viewBox="0 0 13 13"><rect x="0.5" y="0.5" width="12" height="12" fill="#FFF" stroke="#333"/><path d="M2.5 6.5 L5 9 L10.5 3" fill="none" stroke="#333" stroke-width="1.3"/></svg>
<svg class="a" style="left:906px;top:444px" width="14" height="14" viewBox="0 0 14 14"><g fill="#4050FF"><path d="M2.1 9.5 L4.4 12 L11 5.5 L8.5 3 Z"/><path d="M1 11.3 L2.9 13.1 L0.7 13.7 Z"/><path d="M9.6 2 L10.8 0.9 L13.1 3.2 L12 4.4 Z"/></g></svg>
<div class="t" style="left:945.5px;top:441px;color:#1E1E1E;transform-origin:0 0;transform:scaleX(0.9924051511646175);">dbo.ProductBarcode</div>
<div class="a" style="left:0px;top:460px;width:1831px;height:1px;background:#CFD2E2;"></div>
<svg class="a" style="left:24px;top:465px" width="7" height="10" viewBox="0 0 7 10"><path d="M1 1 L5 5 L1 9" fill="none" stroke="#9A9A9A" stroke-width="1.5"/></svg>
<svg class="a" style="left:40px;top:464px" width="13" height="12" viewBox="0 0 13 12"><rect x="0" y="0" width="13" height="12" fill="#333"/><rect x="1" y="3" width="3" height="2" fill="#FFF"/><rect x="5" y="3" width="3" height="2" fill="#FFF"/><rect x="9" y="3" width="3" height="2" fill="#FFF"/><rect x="1" y="6" width="3" height="2" fill="#FFF"/><rect x="5" y="6" width="3" height="2" fill="#FFF"/><rect x="9" y="6" width="3" height="2" fill="#FFF"/><rect x="1" y="9" width="3" height="2" fill="#FFF"/><rect x="5" y="9" width="3" height="2" fill="#FFF"/><rect x="9" y="9" width="3" height="2" fill="#FFF"/></svg>
<div class="t" style="left:60px;top:460px;color:#1E1E1E;transform-origin:0 0;transform:scaleX(0.955);">Table</div>
<div class="t" style="left:359.5px;top:460px;color:#1E1E1E;transform-origin:0 0;transform:scaleX(0.9861000741534525);">dbo.ProductOtherBrandMapping</div>
<svg class="a" style="left:891px;top:464px" width="13" height="13" viewBox="0 0 13 13"><rect x="0.5" y="0.5" width="12" height="12" fill="#FFF" stroke="#333"/><path d="M2.5 6.5 L5 9 L10.5 3" fill="none" stroke="#333" stroke-width="1.3"/></svg>
<svg class="a" style="left:906px;top:463px" width="14" height="14" viewBox="0 0 14 14"><g fill="#4050FF"><path d="M2.1 9.5 L4.4 12 L11 5.5 L8.5 3 Z"/><path d="M1 11.3 L2.9 13.1 L0.7 13.7 Z"/><path d="M9.6 2 L10.8 0.9 L13.1 3.2 L12 4.4 Z"/></g></svg>
<div class="t" style="left:945.5px;top:460px;color:#1E1E1E;transform-origin:0 0;transform:scaleX(0.9861000741534525);">dbo.ProductOtherBrandMapping</div>
<div class="a" style="left:0px;top:479px;width:1831px;height:1px;background:#CFD2E2;"></div>
<svg class="a" style="left:24px;top:484px" width="7" height="10" viewBox="0 0 7 10"><path d="M1 1 L5 5 L1 9" fill="none" stroke="#9A9A9A" stroke-width="1.5"/></svg>
<svg class="a" style="left:40px;top:483px" width="13" height="12" viewBox="0 0 13 12"><rect x="0" y="0" width="13" height="12" fill="#333"/><rect x="1" y="3" width="3" height="2" fill="#FFF"/><rect x="5" y="3" width="3" height="2" fill="#FFF"/><rect x="9" y="3" width="3" height="2" fill="#FFF"/><rect x="1" y="6" width="3" height="2" fill="#FFF"/><rect x="5" y="6" width="3" height="2" fill="#FFF"/><rect x="9" y="6" width="3" height="2" fill="#FFF"/><rect x="1" y="9" width="3" height="2" fill="#FFF"/><rect x="5" y="9" width="3" height="2" fill="#FFF"/><rect x="9" y="9" width="3" height="2" fill="#FFF"/></svg>
<div class="t" style="left:60px;top:479px;color:#1E1E1E;transform-origin:0 0;transform:scaleX(0.955);">Table</div>
<div class="t" style="left:359.5px;top:479px;color:#1E1E1E;transform-origin:0 0;transform:scaleX(0.9843076721929022);">dbo.ProductOtherBrandMaster</div>
<svg class="a" style="left:891px;top:483px" width="13" height="13" viewBox="0 0 13 13"><rect x="0.5" y="0.5" width="12" height="12" fill="#FFF" stroke="#333"/><path d="M2.5 6.5 L5 9 L10.5 3" fill="none" stroke="#333" stroke-width="1.3"/></svg>
<svg class="a" style="left:906px;top:482px" width="14" height="14" viewBox="0 0 14 14"><g fill="#4050FF"><path d="M2.1 9.5 L4.4 12 L11 5.5 L8.5 3 Z"/><path d="M1 11.3 L2.9 13.1 L0.7 13.7 Z"/><path d="M9.6 2 L10.8 0.9 L13.1 3.2 L12 4.4 Z"/></g></svg>
<div class="t" style="left:945.5px;top:479px;color:#1E1E1E;transform-origin:0 0;transform:scaleX(0.9843076721929022);">dbo.ProductOtherBrandMaster</div>
<div class="a" style="left:0px;top:498px;width:1831px;height:1px;background:#CFD2E2;"></div>
<svg class="a" style="left:24px;top:503px" width="7" height="10" viewBox="0 0 7 10"><path d="M1 1 L5 5 L1 9" fill="none" stroke="#9A9A9A" stroke-width="1.5"/></svg>
<svg class="a" style="left:40px;top:502px" width="13" height="12" viewBox="0 0 13 12"><rect x="0" y="0" width="13" height="12" fill="#333"/><rect x="1" y="3" width="3" height="2" fill="#FFF"/><rect x="5" y="3" width="3" height="2" fill="#FFF"/><rect x="9" y="3" width="3" height="2" fill="#FFF"/><rect x="1" y="6" width="3" height="2" fill="#FFF"/><rect x="5" y="6" width="3" height="2" fill="#FFF"/><rect x="9" y="6" width="3" height="2" fill="#FFF"/><rect x="1" y="9" width="3" height="2" fill="#FFF"/><rect x="5" y="9" width="3" height="2" fill="#FFF"/><rect x="9" y="9" width="3" height="2" fill="#FFF"/></svg>
<div class="t" style="left:60px;top:498px;color:#1E1E1E;transform-origin:0 0;transform:scaleX(0.955);">Table</div>
<div class="t" style="left:359.5px;top:498px;color:#1E1E1E;transform-origin:0 0;transform:scaleX(0.9746925500383273);">dbo.PurchaseInvoiceHeader_POS</div>
<svg class="a" style="left:891px;top:502px" width="13" height="13" viewBox="0 0 13 13"><rect x="0.5" y="0.5" width="12" height="12" fill="#FFF" stroke="#333"/><path d="M2.5 6.5 L5 9 L10.5 3" fill="none" stroke="#333" stroke-width="1.3"/></svg>
<svg class="a" style="left:906px;top:501px" width="14" height="14" viewBox="0 0 14 14"><g fill="#4050FF"><path d="M2.1 9.5 L4.4 12 L11 5.5 L8.5 3 Z"/><path d="M1 11.3 L2.9 13.1 L0.7 13.7 Z"/><path d="M9.6 2 L10.8 0.9 L13.1 3.2 L12 4.4 Z"/></g></svg>
<div class="t" style="left:945.5px;top:498px;color:#1E1E1E;transform-origin:0 0;transform:scaleX(0.9746925500383273);">dbo.PurchaseInvoiceHeader_POS</div>
<div class="a" style="left:0px;top:517px;width:1831px;height:1px;background:#CFD2E2;"></div>
<svg class="a" style="left:1834px;top:5px" width="11" height="7" viewBox="0 0 11 7"><path d="M0.5 6 L5.5 0.5 L10.5 6 Z" fill="#868999"/></svg>
<div class="a" style="left:1835px;top:22px;width:9px;height:2px;background:#C2C3C9;"></div>
<svg class="a" style="left:1834px;top:29px" width="11" height="7" viewBox="0 0 11 7"><path d="M0.5 6 L5.5 0.5 L10.5 6 Z" fill="#868999"/></svg>
<div class="a" style="left:1835px;top:90px;width:9px;height:26px;background:#C2C3C9;"></div>
<svg class="a" style="left:1834px;top:500px" width="11" height="7" viewBox="0 0 11 7"><path d="M0.5 0.5 L5.5 6 L10.5 0.5 Z" fill="#868999"/></svg>
</div>
<div class="a" style="left:36px;top:667px;width:1849px;height:2px;background:#E6E6DC;"></div>
<div class="a" style="left:36px;top:669px;width:1849px;height:19px;background:#CCCEDB;"></div>
<div class="a" style="left:36px;top:688px;width:1849px;height:2px;background:#E6E6DC;"></div>
<svg class="a" style="left:42px;top:667px;" width="88" height="21" viewBox="0 0 88 21"><path d="M2 1 H84.5 L65.5 19 H2 Z" fill="#3399FF"/><path d="M1.5 1 V19.5 H65.5" fill="none" stroke="#9A9AA8" stroke-width="1"/><path d="M84.5 1 L65.5 19" stroke="#FFFFFF" stroke-width="1" stroke-dasharray="1.5 1"/></svg>
<svg class="a" style="left:48px;top:672px;" width="12" height="12" viewBox="0 0 12 12"><rect x="1" y="1" width="7.5" height="7.5" fill="none" stroke="#1E1E1E" stroke-width="1.3"/><circle cx="8.5" cy="8.5" r="2.3" fill="#1E1E1E"/></svg>
<div class="t" style="left:63.5px;top:667px;font-size:12px;line-height:20px;color:#1E1E1E;font-family:'Liberation Sans',sans-serif;transform-origin:0 0;transform:scaleX(0.9078);">Results</div>
<svg class="a" style="left:130px;top:672px;" width="13" height="12" viewBox="0 0 13 12"><path d="M3.5 11 V1.5 M0.8 4.2 L3.5 1.3 L6.2 4.2 M9.5 0.5 V10 M6.8 7.3 L9.5 10.2 L12.2 7.3" fill="none" stroke="#1E1E1E" stroke-width="1.3"/></svg>
<svg class="a" style="left:146px;top:670px;" width="146" height="20" viewBox="0 0 146 20"><path d="M1.5 19.5 L21.5 1.5 H142 Q143.5 1.5 143.5 3 V19.5" fill="none" stroke="#8F8F9A" stroke-width="1"/><path d="M3.5 19.5 L22 2.5 H142.5" fill="none" stroke="#E4E5EC" stroke-width="1"/></svg>
<svg class="a" style="left:170px;top:675px;" width="12" height="11" viewBox="0 0 12 11"><path d="M2.5 9.5 V2 C2.5 1.2 3 0.8 3.8 0.8 H10 C10.8 0.8 11.2 1.3 11.2 2 C11.2 2.8 10.8 3.2 10 3.2 H8.5 V8.8 C8.5 9.6 8 10.2 7.2 10.2 H1.3 C0.7 10.2 0.4 9.7 0.4 9.2 C0.4 8.6 0.8 8.2 1.3 8.2 H2.5" fill="none" stroke="#1E1E1E" stroke-width="1.1"/></svg>
<div class="t" style="left:185.5px;top:671px;font-size:12px;line-height:20px;color:#1E1E1E;font-family:'Liberation Sans',sans-serif;transform-origin:0 0;transform:scaleX(1.0087);">Object Definitions</div>
<div class="a" style="left:1037px;top:676px;width:51px;height:1px;background:#FFFFFF;"></div>
<div class="a" style="left:1037px;top:677px;width:51px;height:1px;background:#999999;"></div>
<div class="a" style="left:1037px;top:679px;width:51px;height:1px;background:#FFFFFF;"></div>
<div class="a" style="left:1037px;top:680px;width:51px;height:1px;background:#999999;"></div>
<svg class="a" style="left:1839px;top:672px;" width="13" height="13" viewBox="0 0 13 13"><rect x="1" y="1" width="10.5" height="10.5" fill="#E4E4EA" stroke="#000" stroke-width="1.4"/><path d="M6.25 3 V9.5" stroke="#000" stroke-width="1.2"/></svg>
<svg class="a" style="left:1852px;top:670px;" width="17" height="17" viewBox="0 0 17 17"><rect x="1" y="1" width="14.5" height="14.5" fill="none" stroke="#0F7FE6" stroke-width="1.4"/><rect x="3" y="3" width="10.5" height="10.5" fill="#B8DCF5" stroke="#000" stroke-width="1.4"/><path d="M5 8.25 H11.5" stroke="#000" stroke-width="1.2"/></svg>
<svg class="a" style="left:1869px;top:672px;" width="13" height="13" viewBox="0 0 13 13"><rect x="1" y="1" width="10.5" height="10.5" fill="#E4E4EA" stroke="#000" stroke-width="1.4"/><path d="M3.8 2.8 L6.25 5.2 L8.7 2.8 M3.8 5.8 L6.25 8.2 L8.7 5.8" fill="none" stroke="#000" stroke-width="1.2"/></svg>
<div class="a" style="left:36px;top:690px;width:903px;height:248px;background:#FFFFFF;"></div>
<div class="a" style="left:36px;top:690px;width:903px;height:248px;overflow:hidden">
<div class="a" style="left:102px;top:153px;width:800px;height:17px;background:transparent;border:2px solid #EAEAF2;box-sizing:border-box;"></div>
<div class="a" style="left:103.6px;top:153px;width:328px;height:17px;background:#F8F5A0;"></div>
<div class="c" style="left:83.883px;top:1px;color:#808080">1</div>
<div class="c" style="left:103.6px;top:0px;"><span style="color:#0000FF">CREATE</span><span style="color:#000000"> </span><span style="color:#0000FF">TABLE</span><span style="color:#000000"> </span><span style="color:#000000">[dbo]</span><span style="color:#808080">.</span><span style="color:#000000">[CustomerInvoiceDetail]</span><span style="color:#000000"> </span><span style="color:#808080">(</span></div>
<div class="c" style="left:83.883px;top:18px;color:#808080">2</div>
<div class="c" style="left:103.6px;top:17px;"><span style="color:#000000">    </span><span style="color:#000000">[cid_Id]</span><span style="color:#000000">         </span><span style="color:#0000FF">BIGINT</span><span style="color:#000000">          </span><span style="color:#0000FF">IDENTITY</span><span style="color:#000000"> </span><span style="color:#808080">(</span><span style="color:#000000">1</span><span style="color:#808080">,</span><span style="color:#000000"> </span><span style="color:#000000">1</span><span style="color:#808080">)</span><span style="color:#000000"> </span><span style="color:#808080">NOT</span><span style="color:#000000"> </span><span style="color:#808080">NULL</span><span style="color:#808080">,</span></div>
<div class="c" style="left:83.883px;top:35px;color:#808080">3</div>
<div class="c" style="left:103.6px;top:34px;"><span style="color:#000000">    </span><span style="color:#000000">[cid_cihId]</span><span style="color:#000000">      </span><span style="color:#0000FF">BIGINT</span><span style="color:#000000">          </span><span style="color:#808080">NULL</span><span style="color:#808080">,</span></div>
<div class="c" style="left:83.883px;top:52px;color:#808080">4</div>
<div class="c" style="left:103.6px;top:51px;"><span style="color:#000000">    </span><span style="color:#000000">[cid_taxableAmt]</span><span style="color:#000000"> </span><span style="color:#0000FF">NUMERIC</span><span style="color:#000000"> </span><span style="color:#808080">(</span><span style="color:#000000">18</span><span style="color:#808080">,</span><span style="color:#000000"> </span><span style="color:#000000">2</span><span style="color:#808080">)</span><span style="color:#000000"> </span><span style="color:#808080">NULL</span><span style="color:#808080">,</span></div>
<div class="c" style="left:83.883px;top:69px;color:#808080">5</div>
<div class="c" style="left:103.6px;top:68px;"><span style="color:#000000">    </span><span style="color:#000000">[cid_gstPerc]</span><span style="color:#000000">    </span><span style="color:#0000FF">NUMERIC</span><span style="color:#000000"> </span><span style="color:#808080">(</span><span style="color:#000000">5</span><span style="color:#808080">,</span><span style="color:#000000"> </span><span style="color:#000000">2</span><span style="color:#808080">)</span><span style="color:#000000">  </span><span style="color:#808080">NULL</span><span style="color:#808080">,</span></div>
<div class="c" style="left:83.883px;top:86px;color:#808080">6</div>
<div class="c" style="left:103.6px;top:85px;"><span style="color:#000000">    </span><span style="color:#000000">[cid_cessPerc]</span><span style="color:#000000">   </span><span style="color:#0000FF">NUMERIC</span><span style="color:#000000"> </span><span style="color:#808080">(</span><span style="color:#000000">5</span><span style="color:#808080">,</span><span style="color:#000000"> </span><span style="color:#000000">2</span><span style="color:#808080">)</span><span style="color:#000000">  </span><span style="color:#808080">NULL</span><span style="color:#808080">,</span></div>
<div class="c" style="left:83.883px;top:103px;color:#808080">7</div>
<div class="c" style="left:103.6px;top:102px;"><span style="color:#000000">    </span><span style="color:#000000">[cid_gstAmt]</span><span style="color:#000000">     </span><span style="color:#0000FF">NUMERIC</span><span style="color:#000000"> </span><span style="color:#808080">(</span><span style="color:#000000">18</span><span style="color:#808080">,</span><span style="color:#000000"> </span><span style="color:#000000">2</span><span style="color:#808080">)</span><span style="color:#000000"> </span><span style="color:#808080">NULL</span><span style="color:#808080">,</span></div>
<div class="c" style="left:83.883px;top:120px;color:#808080">8</div>
<div class="c" style="left:103.6px;top:119px;"><span style="color:#000000">    </span><span style="color:#000000">[cid_cessAmt]</span><span style="color:#000000">    </span><span style="color:#0000FF">NUMERIC</span><span style="color:#000000"> </span><span style="color:#808080">(</span><span style="color:#000000">18</span><span style="color:#808080">,</span><span style="color:#000000"> </span><span style="color:#000000">2</span><span style="color:#808080">)</span><span style="color:#000000"> </span><span style="color:#808080">NULL</span><span style="color:#808080">,</span></div>
<div class="c" style="left:83.883px;top:137px;color:#808080">9</div>
<div class="c" style="left:103.6px;top:136px;"><span style="color:#000000">    </span><span style="color:#000000">[cid_netAmt]</span><span style="color:#000000">     </span><span style="color:#0000FF">NUMERIC</span><span style="color:#000000"> </span><span style="color:#808080">(</span><span style="color:#000000">18</span><span style="color:#808080">,</span><span style="color:#000000"> </span><span style="color:#000000">2</span><span style="color:#808080">)</span><span style="color:#000000"> </span><span style="color:#808080">NULL</span><span style="color:#808080">,</span></div>
<div class="c" style="left:76.266px;top:154px;color:#1E1E1E">10</div>
<div class="c" style="left:103.6px;top:153px;"><span style="color:#000000">    </span><span style="color:#000000">[cid_roundOff]</span><span style="color:#000000">   </span><span style="color:#0000FF">NUMERIC</span><span style="color:#000000"> </span><span style="color:#808080">(</span><span style="color:#000000">18</span><span style="color:#808080">,</span><span style="color:#000000"> </span><span style="color:#000000">2</span><span style="color:#808080">)</span><span style="color:#000000"> </span><span style="color:#808080">NULL</span><span style="color:#808080">,</span></div>
<div class="c" style="left:76.266px;top:171px;color:#808080">11</div>
<div class="c" style="left:103.6px;top:170px;"><span style="color:#000000">    </span><span style="color:#0000FF">CONSTRAINT</span><span style="color:#000000"> </span><span style="color:#000000">[PK_CustomerInvoiceDetail]</span><span style="color:#000000"> </span><span style="color:#0000FF">PRIMARY</span><span style="color:#000000"> </span><span style="color:#0000FF">KEY</span><span style="color:#000000"> </span><span style="color:#0000FF">CLUSTERED</span><span style="color:#000000"> </span><span style="color:#808080">(</span><span style="color:#000000">[cid_Id]</span><span style="color:#000000"> </span><span style="color:#0000FF">ASC</span><span style="color:#808080">)</span></div>
<div class="c" style="left:76.266px;top:188px;color:#808080">12</div>
<div class="c" style="left:103.6px;top:187px;"><span style="color:#808080">)</span><span style="color:#808080">;</span></div>
<div class="c" style="left:76.266px;top:205px;color:#808080">13</div>
<div class="c" style="left:103.6px;top:204px;"><span style="color:#0000FF">GO</span></div>
<div class="c" style="left:76.266px;top:222px;color:#808080">14</div>
<div class="c" style="left:76.266px;top:239px;color:#808080">15</div>
<svg class="a" style="left:1px;top:1px" width="55" height="247" viewBox="0 0 55 247"><path d="M2 2.5 H16 L37.5 10.5 H52 V234.5 H37.5 L16 244 H2 Z" fill="#E6F7E6" stroke="#1A8C1A" stroke-width="2" stroke-linejoin="round"/><rect x="4.5" y="4" width="12" height="238" rx="2.5" fill="none" stroke="#555" stroke-width="0.9"/><rect x="37.5" y="12" width="12.5" height="222.5" rx="2.5" fill="none" stroke="#555" stroke-width="0.9"/><path d="M16.5 147 L35 155.5 L16.5 164 Z" fill="#F2F5A0" opacity="0.8"/><rect x="5" y="147" width="11.5" height="17" fill="#E8F06A" stroke="#999" stroke-width="0.8"/></svg>
</div>
<div class="a" style="left:939px;top:690px;width:18px;height:248px;background:#F5F5F5;"></div>
<svg class="a" style="left:943px;top:695px;" width="11" height="7" viewBox="0 0 11 7"><path d="M0.5 6 L5.5 0.5 L10.5 6 Z" fill="#868999"/></svg>
<div class="a" style="left:943px;top:707px;width:11px;height:100px;background:#C2C3C9;"></div>
<div class="a" style="left:939px;top:773px;width:18px;height:2px;background:#0000C0;"></div>
<svg class="a" style="left:943px;top:926px;" width="11" height="7" viewBox="0 0 11 7"><path d="M0.5 0.5 L5.5 6 L10.5 0.5 Z" fill="#868999"/></svg>
<div class="a" style="left:957px;top:690px;width:5px;height:248px;background:#EEEEF2;"></div>
<div class="a" style="left:962px;top:690px;width:904px;height:248px;background:#FFFFFF;"></div>
<div class="a" style="left:962px;top:690px;width:904px;height:248px;overflow:hidden">
<svg class="a" style="left:50px;top:153px" width="854" height="17" viewBox="0 0 854 17"><defs><pattern id="hp" patternUnits="userSpaceOnUse" width="9.9" height="17" x="2"><path d="M-3 16.5 L6 0 M6.9 16.5 L15.9 0" stroke="#C8C8C8" stroke-width="1"/></pattern></defs><rect width="854" height="17" fill="url(#hp)"/></svg>
<div class="a" style="left:50px;top:170px;width:854px;height:17px;background:transparent;border:2px solid #EAEAF2;border-right:none;box-sizing:border-box;"></div>
<div class="c" style="left:31.883px;top:1px;color:#808080">1</div>
<div class="c" style="left:50.39999999999998px;top:0px;"><span style="color:#0000FF">CREATE</span><span style="color:#000000"> </span><span style="color:#0000FF">TABLE</span><span style="color:#000000"> </span><span style="color:#000000">[dbo]</span><span style="color:#808080">.</span><span style="color:#000000">[CustomerInvoiceDetail]</span><span style="color:#000000"> </span><span style="color:#808080">(</span></div>
<div class="c" style="left:31.883px;top:18px;color:#808080">2</div>
<div class="c" style="left:50.39999999999998px;top:17px;"><span style="color:#000000">    </span><span style="color:#000000">[cid_Id]</span><span style="color:#000000">         </span><span style="color:#0000FF">BIGINT</span><span style="color:#000000">          </span><span style="color:#0000FF">IDENTITY</span><span style="color:#000000"> </span><span style="color:#808080">(</span><span style="color:#000000">1</span><span style="color:#808080">,</span><span style="color:#000000"> </span><span style="color:#000000">1</span><span style="color:#808080">)</span><span style="color:#000000"> </span><span style="color:#808080">NOT</span><span style="color:#000000"> </span><span style="color:#808080">NULL</span><span style="color:#808080">,</span></div>
<div class="c" style="left:31.883px;top:35px;color:#808080">3</div>
<div class="c" style="left:50.39999999999998px;top:34px;"><span style="color:#000000">    </span><span style="color:#000000">[cid_cihId]</span><span style="color:#000000">      </span><span style="color:#0000FF">BIGINT</span><span style="color:#000000">          </span><span style="color:#808080">NULL</span><span style="color:#808080">,</span></div>
<div class="c" style="left:31.883px;top:52px;color:#808080">4</div>
<div class="c" style="left:50.39999999999998px;top:51px;"><span style="color:#000000">    </span><span style="color:#000000">[cid_taxableAmt]</span><span style="color:#000000"> </span><span style="color:#0000FF">NUMERIC</span><span style="color:#000000"> </span><span style="color:#808080">(</span><span style="color:#000000">18</span><span style="color:#808080">,</span><span style="color:#000000"> </span><span style="color:#000000">2</span><span style="color:#808080">)</span><span style="color:#000000"> </span><span style="color:#808080">NULL</span><span style="color:#808080">,</span></div>
<div class="c" style="left:31.883px;top:69px;color:#808080">5</div>
<div class="c" style="left:50.39999999999998px;top:68px;"><span style="color:#000000">    </span><span style="color:#000000">[cid_gstPerc]</span><span style="color:#000000">    </span><span style="color:#0000FF">NUMERIC</span><span style="color:#000000"> </span><span style="color:#808080">(</span><span style="color:#000000">5</span><span style="color:#808080">,</span><span style="color:#000000"> </span><span style="color:#000000">2</span><span style="color:#808080">)</span><span style="color:#000000">  </span><span style="color:#808080">NULL</span><span style="color:#808080">,</span></div>
<div class="c" style="left:31.883px;top:86px;color:#808080">6</div>
<div class="c" style="left:50.39999999999998px;top:85px;"><span style="color:#000000">    </span><span style="color:#000000">[cid_cessPerc]</span><span style="color:#000000">   </span><span style="color:#0000FF">NUMERIC</span><span style="color:#000000"> </span><span style="color:#808080">(</span><span style="color:#000000">5</span><span style="color:#808080">,</span><span style="color:#000000"> </span><span style="color:#000000">2</span><span style="color:#808080">)</span><span style="color:#000000">  </span><span style="color:#808080">NULL</span><span style="color:#808080">,</span></div>
<div class="c" style="left:31.883px;top:103px;color:#808080">7</div>
<div class="c" style="left:50.39999999999998px;top:102px;"><span style="color:#000000">    </span><span style="color:#000000">[cid_gstAmt]</span><span style="color:#000000">     </span><span style="color:#0000FF">NUMERIC</span><span style="color:#000000"> </span><span style="color:#808080">(</span><span style="color:#000000">18</span><span style="color:#808080">,</span><span style="color:#000000"> </span><span style="color:#000000">2</span><span style="color:#808080">)</span><span style="color:#000000"> </span><span style="color:#808080">NULL</span><span style="color:#808080">,</span></div>
<div class="c" style="left:31.883px;top:120px;color:#808080">8</div>
<div class="c" style="left:50.39999999999998px;top:119px;"><span style="color:#000000">    </span><span style="color:#000000">[cid_cessAmt]</span><span style="color:#000000">    </span><span style="color:#0000FF">NUMERIC</span><span style="color:#000000"> </span><span style="color:#808080">(</span><span style="color:#000000">18</span><span style="color:#808080">,</span><span style="color:#000000"> </span><span style="color:#000000">2</span><span style="color:#808080">)</span><span style="color:#000000"> </span><span style="color:#808080">NULL</span><span style="color:#808080">,</span></div>
<div class="c" style="left:31.883px;top:137px;color:#808080">9</div>
<div class="c" style="left:50.39999999999998px;top:136px;"><span style="color:#000000">    </span><span style="color:#000000">[cid_netAmt]</span><span style="color:#000000">     </span><span style="color:#0000FF">NUMERIC</span><span style="color:#000000"> </span><span style="color:#808080">(</span><span style="color:#000000">18</span><span style="color:#808080">,</span><span style="color:#000000"> </span><span style="color:#000000">2</span><span style="color:#808080">)</span><span style="color:#000000"> </span><span style="color:#808080">NULL</span><span style="color:#808080">,</span></div>
<div class="c" style="left:24.266px;top:171px;color:#1E1E1E">10</div>
<div class="c" style="left:50.39999999999998px;top:170px;"><span style="color:#000000">    </span><span style="color:#0000FF">CONSTRAINT</span><span style="color:#000000"> </span><span style="color:#000000">[PK_CustomerInvoiceDetail]</span><span style="color:#000000"> </span><span style="color:#0000FF">PRIMARY</span><span style="color:#000000"> </span><span style="color:#0000FF">KEY</span><span style="color:#000000"> </span><span style="color:#0000FF">CLUSTERED</span><span style="color:#000000"> </span><span style="color:#808080">(</span><span style="color:#000000">[cid_Id]</span><span style="color:#000000"> </span><span style="color:#0000FF">ASC</span><span style="color:#808080">)</span></div>
<div class="c" style="left:24.266px;top:188px;color:#808080">11</div>
<div class="c" style="left:50.39999999999998px;top:187px;"><span style="color:#808080">)</span><span style="color:#808080">;</span></div>
<div class="c" style="left:24.266px;top:205px;color:#808080">12</div>
<div class="c" style="left:50.39999999999998px;top:204px;"><span style="color:#0000FF">GO</span></div>
<div class="c" style="left:24.266px;top:222px;color:#808080">13</div>
<div class="c" style="left:24.266px;top:239px;color:#808080">14</div>
</div>
<div class="a" style="left:1866px;top:690px;width:18px;height:248px;background:#F5F5F5;"></div>
<svg class="a" style="left:1870px;top:695px;" width="11" height="7" viewBox="0 0 11 7"><path d="M0.5 6 L5.5 0.5 L10.5 6 Z" fill="#868999"/></svg>
<div class="a" style="left:1870px;top:707px;width:11px;height:100px;background:#C2C3C9;"></div>
<div class="a" style="left:1866px;top:775px;width:18px;height:2px;background:#0000C0;"></div>
<svg class="a" style="left:1870px;top:926px;" width="11" height="7" viewBox="0 0 11 7"><path d="M0.5 0.5 L5.5 6 L10.5 0.5 Z" fill="#868999"/></svg>
<div class="a" style="left:823px;top:802px;width:140px;height:26px;background:#F0F0F6;border:1px solid #767676;box-sizing:border-box;"></div>
<div class="t" style="left:830px;top:806px;font-size:12px;line-height:20px;color:#575757;font-family:'Liberation Sans',sans-serif;transform-origin:0 0;transform:scaleX(1.0089);">Source object definition</div>
<div class="a" style="left:36px;top:938px;width:1849px;height:19px;background:#F5F5F5;"></div>
<div class="a" style="left:35px;top:939px;width:59px;height:16px;background:#FFFFFF;border:1px solid #CCCEDB;box-sizing:border-box;"></div>
<div class="t" style="left:37.5px;top:937px;font-size:12px;line-height:20px;color:#1E1E1E;font-family:'Liberation Sans',sans-serif;transform-origin:0 0;transform:scaleX(0.8613);">100 %</div>
<svg class="a" style="left:85px;top:946px;" width="7" height="4" viewBox="0 0 7 4"><path d="M0 0 H6 L3 3.5 Z" fill="#717171"/></svg>
<svg class="a" style="left:118px;top:941px;" width="13" height="13" viewBox="0 0 13 13"><circle cx="6.5" cy="6.5" r="5.8" fill="#1E8C1E"/><path d="M3.6 6.6 L5.7 8.6 L9.5 4.6" fill="none" stroke="#FFF" stroke-width="1.5"/></svg>
<div class="t" style="left:135.5px;top:937px;font-size:12px;line-height:20px;color:#1E1E1E;font-family:'Liberation Sans',sans-serif;transform-origin:0 0;transform:scaleX(0.9043);">No issues found</div>
<svg class="a" style="left:294px;top:942px;" width="7" height="10" viewBox="0 0 7 10"><path d="M6 0.5 V9 L0.8 4.75 Z" fill="#868999"/></svg>
<div class="a" style="left:306px;top:942px;width:434px;height:9px;background:#C2C3C9;"></div>
<svg class="a" style="left:748px;top:942px;" width="7" height="10" viewBox="0 0 7 10"><path d="M0.5 0.5 V9 L5.7 4.75 Z" fill="#868999"/></svg>
<div class="t" style="left:780px;top:937px;font-size:12px;line-height:20px;color:#1E1E1E;font-family:'Liberation Sans',sans-serif;transform-origin:0 0;transform:scaleX(0.8784);">Ln: 10</div>
<div class="t" style="left:827px;top:937px;font-size:12px;line-height:20px;color:#1E1E1E;font-family:'Liberation Sans',sans-serif;transform-origin:0 0;transform:scaleX(0.8649);">Ch: 1</div>
<div class="t" style="left:870.8px;top:937px;font-size:12px;line-height:20px;color:#1E1E1E;font-family:'Liberation Sans',sans-serif;transform-origin:0 0;transform:scaleX(0.7975);">TABS</div>
<div class="t" style="left:914.6px;top:937px;font-size:12px;line-height:20px;color:#1E1E1E;font-family:'Liberation Sans',sans-serif;transform-origin:0 0;transform:scaleX(0.8764);">MIXED</div>
<div class="a" style="left:957px;top:938px;width:5px;height:19px;background:#EEEEF2;"></div>
<div class="a" style="left:963px;top:939px;width:59px;height:16px;background:#FFFFFF;border:1px solid #CCCEDB;box-sizing:border-box;"></div>
<div class="t" style="left:965.5px;top:937px;font-size:12px;line-height:20px;color:#1E1E1E;font-family:'Liberation Sans',sans-serif;transform-origin:0 0;transform:scaleX(0.8613);">100 %</div>
<svg class="a" style="left:1013px;top:946px;" width="7" height="4" viewBox="0 0 7 4"><path d="M0 0 H6 L3 3.5 Z" fill="#717171"/></svg>
<svg class="a" style="left:1045px;top:941px;" width="13" height="13" viewBox="0 0 13 13"><circle cx="6.5" cy="6.5" r="5.8" fill="#1E8C1E"/><path d="M3.6 6.6 L5.7 8.6 L9.5 4.6" fill="none" stroke="#FFF" stroke-width="1.5"/></svg>
<div class="t" style="left:1062.5px;top:937px;font-size:12px;line-height:20px;color:#1E1E1E;font-family:'Liberation Sans',sans-serif;transform-origin:0 0;transform:scaleX(0.9043);">No issues found</div>
<div class="t" style="left:1708.5px;top:937px;font-size:12px;line-height:20px;color:#1E1E1E;font-family:'Liberation Sans',sans-serif;transform-origin:0 0;transform:scaleX(0.8632);">Ln: 10</div>
<div class="t" style="left:1754.8px;top:937px;font-size:12px;line-height:20px;color:#1E1E1E;font-family:'Liberation Sans',sans-serif;transform-origin:0 0;transform:scaleX(0.8296);">Ch: 1</div>
<div class="t" style="left:1798.3px;top:937px;font-size:12px;line-height:20px;color:#1E1E1E;font-family:'Liberation Sans',sans-serif;transform-origin:0 0;transform:scaleX(0.7876);">TABS</div>
<div class="t" style="left:1842.6px;top:937px;font-size:12px;line-height:20px;color:#1E1E1E;font-family:'Liberation Sans',sans-serif;transform-origin:0 0;transform:scaleX(0.8578);">MIXED</div>
<div class="a" style="left:35px;top:958px;width:1850px;height:24px;background:#F5F5F5;border:1px solid #8A8A8A;box-sizing:border-box;"></div>
<div class="t" style="left:40.5px;top:961px;font-size:12px;line-height:20px;color:#1E1E1E;font-family:'Liberation Sans',sans-serif;transform-origin:0 0;transform:scaleX(0.9876);">Comparison complete.  Differences detected. One or more actions will prevent update if included. See Error List for details.</div>
<div class="a" style="left:31px;top:985px;width:1858px;height:1px;background:#CCCEDB;"></div>
<div class="t" style="left:31.7px;top:990px;font-size:12px;line-height:20px;color:#1E1E1E;font-family:'Liberation Sans',sans-serif;transform-origin:0 0;transform:scaleX(0.9311);">Error List</div>
<div class="t" style="left:89.3px;top:990px;font-size:12px;line-height:20px;color:#1E1E1E;font-family:'Liberation Sans',sans-serif;transform-origin:0 0;transform:scaleX(1.0513);">Output</div>
<div class="a" style="left:31px;top:1011px;width:46px;height:6px;background:#CCCEDB;"></div>
<div class="a" style="left:89px;top:1011px;width:38px;height:6px;background:#CCCEDB;"></div>
<div class="a" style="left:0px;top:1017px;width:1920px;height:23px;background:#68217A;"></div>
<svg class="a" style="left:3px;top:1020px;" width="18" height="18" viewBox="0 0 18 18"><path d="M1.5 1.5 H16.5 V13 H11.5 L9 15.8 L6.5 13 H1.5 Z" fill="#7A3A8C" stroke="#FFF" stroke-width="1.2"/></svg>
<div class="t" style="left:28.7px;top:1019px;font-size:12px;line-height:20px;color:#FFFFFF;font-family:'Liberation Sans',sans-serif;transform-origin:0 0;transform:scaleX(0.9118);">Ready</div>
<svg class="a" style="left:1741px;top:1022px;" width="16" height="15" viewBox="0 0 16 15"><rect x="0.8" y="0.8" width="14" height="3" fill="none" stroke="#FFF" stroke-width="1.1"/><path d="M2 3.8 V13.8 H13.5 V3.8" fill="none" stroke="#FFF" stroke-width="1.1"/><path d="M6 3.8 V9 L7.75 7.8 L9.5 9 V3.8" fill="none" stroke="#FFF" stroke-width="1"/></svg>
<div class="t" style="left:1763.2px;top:1019px;font-size:12px;line-height:20px;color:#FFFFFF;font-family:'Liberation Sans',sans-serif;transform-origin:0 0;transform:scaleX(0.9564);">Select Repository</div>
<svg class="a" style="left:1859px;top:1027px;" width="9" height="5" viewBox="0 0 9 5"><path d="M0 4.5 L4 0.5 L8 4.5 Z" fill="#FFF"/></svg>
<svg class="a" style="left:1888px;top:1020px;" width="15" height="16" viewBox="0 0 15 16"><path d="M2 12 C3 10.5 3 9 3 6.5 C3 3.5 5 1.5 7.5 1.5 C10 1.5 12 3.5 12 6.5 C12 9 12 10.5 13 12 Z" fill="#7A3A8C" stroke="#FFF" stroke-width="1.2"/><path d="M6 13.5 C6.5 14.8 8.5 14.8 9 13.5" fill="none" stroke="#FFF" stroke-width="1.1"/></svg>
<div class="a" style="left:0px;top:1040px;width:1920px;height:40px;background:#302A25;"></div>
<svg class="a" style="left:15px;top:1052px;" width="18" height="17" viewBox="0 0 18 17"><path d="M0.5 2.3 L7 1.4 V7.8 H0.5 Z M8 1.2 L17 0 V7.8 H8 Z M0.5 8.8 H7 V15.2 L0.5 14.3 Z M8 8.8 H17 V16.6 L8 15.4 Z" fill="#FFFFFF"/></svg>
<div class="a" style="left:48px;top:1040px;width:288px;height:40px;background:#F0F0F0;"></div>
<svg class="a" style="left:59px;top:1050px;" width="19" height="19" viewBox="0 0 19 19"><circle cx="11.5" cy="7" r="5.5" fill="none" stroke="#1E1E1E" stroke-width="1.3"/><path d="M7.6 11 L1 17.6" stroke="#1E1E1E" stroke-width="1.4"/></svg>
<div class="t" style="left:88px;top:1050.5px;font-size:15px;line-height:20px;color:#3C3C3C;font-family:'Liberation Sans',sans-serif;transform-origin:0 0;transform:scaleX(0.9650);">Type here to search</div>
<svg class="a" style="left:248px;top:1041px;" width="88" height="39" viewBox="0 0 88 39"><defs><radialGradient id="mg" cx="0.45" cy="0.3" r="0.75"><stop offset="0" stop-color="#E2E6EA"/><stop offset="0.7" stop-color="#C4C8CC"/><stop offset="1" stop-color="#8E9296"/></radialGradient><linearGradient id="lg" x1="0" y1="0" x2="1" y2="0"><stop offset="0" stop-color="#F0C020"/><stop offset="1" stop-color="#D8A010"/></linearGradient></defs><circle cx="48" cy="52" r="37" fill="url(#mg)"/><circle cx="25.5" cy="32.5" r="4.5" fill="#B8BCC0"/><circle cx="65" cy="38" r="6" fill="#B4B8BC"/><path d="M48 7 C48 4 52 3 54 3.5 C56 3.5 58 5 58 7 Z" fill="#E8B820"/><path d="M46 7 H58 L60 17 H44 Z" fill="url(#lg)"/><path d="M56 7 H61 L64 16 L60 17 Z" fill="#E8601A"/><rect x="48" y="8" width="5.5" height="9" fill="#5E8A96"/><path d="M45 17 L41 24 M50 17 L48 25 M58 17 L60 25 M62 16 L66 23" stroke="#E0B020" stroke-width="1.3"/><path d="M42 25.5 L48 19 H53 L47 26.5 Z" fill="#E8B820"/><circle cx="41" cy="24.5" r="1" fill="#445"/><circle cx="60" cy="25.5" r="1" fill="#445"/><circle cx="66" cy="23.5" r="1" fill="#445"/></svg></svg>
<div class="a" style="left:48px;top:1040px;width:288px;height:1px;background:#C8C8C8;"></div>
<div class="a" style="left:48px;top:1079px;width:213px;height:1px;background:#C8C8C8;"></div>
<div class="a" style="left:331px;top:1079px;width:5px;height:1px;background:#C8C8C8;"></div>
<svg class="a" style="left:351px;top:1050px;" width="18" height="18" viewBox="0 0 18 18"><rect x="1.5" y="4" width="12" height="9" fill="none" stroke="#FFF" stroke-width="1.2"/><path d="M0 1.5 H15 M0 15.5 H15 M16.5 0 V3 M16.5 5 V12 M16.5 14 V17" stroke="#FFF" stroke-width="1.2"/></svg>
<svg class="a" style="left:399px;top:1048px;" width="25" height="25" viewBox="0 0 25 25"><defs><linearGradient id="eg" x1="0" y1="0" x2="1" y2="1"><stop offset="0" stop-color="#3BD16F"/><stop offset="0.5" stop-color="#1E9DE0"/><stop offset="1" stop-color="#0C59A4"/></linearGradient></defs><circle cx="12.5" cy="12.5" r="12" fill="url(#eg)"/><path d="M5 15 C5 9 9 6 13 6 C17 6 20 9 20 12 C20 14 18 15 15 15 H9 C9 18 12 20 16 20 C18 20 20 19.5 21 19 C19 22 16 24 12.5 24 C8 24 5 20 5 15 Z" fill="#0F4C8A" opacity="0.9"/></svg>
<svg class="a" style="left:448px;top:1048px;" width="24" height="22" viewBox="0 0 24 22"><path d="M1 3 H9 L11 5 H23 V20 H1 Z" fill="#E8B22E"/><path d="M1 7 H23 V20 H1 Z" fill="#FFD966"/><rect x="8" y="14" width="8" height="6" fill="#2F7FD0"/></svg>
<svg class="a" style="left:496px;top:1048px;" width="25" height="25" viewBox="0 0 25 25"><path d="M8 5 V3 C8 1 9 0.5 12.5 0.5 C16 0.5 17 1 17 3 V5" fill="none" stroke="#0A84D6" stroke-width="2"/><rect x="1" y="5" width="23" height="19" rx="3" fill="#F4F4F4"/><rect x="8" y="10" width="4" height="4" fill="#F25022"/><rect x="13" y="10" width="4" height="4" fill="#7FBA00"/><rect x="8" y="15" width="4" height="4" fill="#00A4EF"/><rect x="13" y="15" width="4" height="4" fill="#FFB900"/></svg>
<svg class="a" style="left:545px;top:1048px;" width="26" height="25" viewBox="0 0 26 25"><path d="M1 8 L13 0.5 L25 8 V24 H1 Z" fill="#0F6CBD"/><path d="M1 8 H25 V24 H1 Z" fill="#28A8EA"/><path d="M1 8 L13 16.5 L25 8 V10.5 L13 19 L1 10.5 Z" fill="#FFFFFF"/><path d="M1 8 H25 L13 16.5 Z" fill="#E8F4FC"/><path d="M13 19 L25 24 V10.5 Z" fill="#50C8F8" opacity="0.6"/></svg>
<svg class="a" style="left:594px;top:1048px;" width="28" height="27" viewBox="0 0 28 27"><circle cx="13" cy="12.5" r="12" fill="#DB4437"/><path d="M13 12.5 L23.4 6.5 A12 12 0 0 1 13 24.5 Z" fill="#FFCD40"/><path d="M13 12.5 L13 24.5 A12 12 0 0 1 2.6 6.5 Z" fill="#0F9D58"/><circle cx="13" cy="12.5" r="5.6" fill="#FFF"/><circle cx="13" cy="12.5" r="4.4" fill="#4285F4"/><circle cx="20.5" cy="19.5" r="6.5" fill="#3A4650" stroke="#2B2723" stroke-width="0.8"/><circle cx="20" cy="17.5" r="2.3" fill="#8A9AA8"/><path d="M16 23 C17 20.5 19 20 20.5 20 C22 20 24 21 24.5 23" fill="#6A7A88"/></svg>
<svg class="a" style="left:643px;top:1047px;" width="27" height="27" viewBox="0 0 27 27"><path d="M19 1.5 L25.5 4.5 V22.5 L19 25.5 L9 16.5 L4.5 20 L1.5 18.5 V8.5 L4.5 7 L9 10.5 Z" fill="#68217A" stroke="#FFFFFF" stroke-width="1.2" stroke-linejoin="round"/><path d="M19 8 V19 L12.5 13.5 Z M4.5 10.5 V16.5 L7.8 13.5 Z" fill="#FFF"/></svg>
<svg class="a" style="left:692px;top:1048px;" width="26" height="25" viewBox="0 0 26 25"><ellipse cx="9" cy="3.5" rx="7" ry="2.5" fill="#F2D35B"/><path d="M2 3.5 V15 C2 17 16 17 16 15 V3.5 C16 6 2 6 2 3.5 Z" fill="#E8C040"/><path d="M1 19 V24 H6 M20 1 H25 V6 M20 24 H25 V19" fill="none" stroke="#3BA03B" stroke-width="1.5"/><path d="M12 22 L22 12 M12 12 L22 22" stroke="#E86A10" stroke-width="2.5"/></svg>
<svg class="a" style="left:741px;top:1048px;" width="26" height="26" viewBox="0 0 26 26"><path d="M19 0.5 L25 3.5 V22.5 L19 25.5 L7 14.5 L2.5 18 L0.5 17 V9 L2.5 8 L7 11.5 Z M19 7.5 L12 13 L19 18.5 Z" fill="#1F9CF0"/><path d="M19 0.5 L25 3.5 V22.5 L19 25.5 Z" fill="#0065A9"/></svg>
<svg class="a" style="left:791px;top:1048px;" width="24" height="25" viewBox="0 0 24 25"><circle cx="12" cy="12.5" r="11" fill="#1E9BE8"/><circle cx="6" cy="6" r="5" fill="#1E9BE8"/><circle cx="18" cy="19" r="5" fill="#1E9BE8"/><text x="12" y="18.5" text-anchor="middle" font-family="Liberation Sans" font-weight="bold" font-size="16" fill="#FFF">S</text></svg>
<svg class="a" style="left:840px;top:1048px;" width="24" height="25" viewBox="0 0 24 25"><rect x="9" y="2" width="14" height="21" fill="#FFFFFF" stroke="#21A366" stroke-width="1"/><path d="M13 6 H22 M13 10 H22 M13 14 H22 M13 18 H22 M17 3 V22" stroke="#21A366" stroke-width="1"/><path d="M0.5 4 L13 1.5 V23.5 L0.5 21 Z" fill="#107C41"/><text x="6.8" y="17" text-anchor="middle" font-family="Liberation Sans" font-weight="bold" font-size="11" fill="#FFF">X</text></svg>
<div class="a" style="left:877px;top:1040px;width:48px;height:40px;background:#5A5551;"></div>
<svg class="a" style="left:889px;top:1048px;" width="26" height="26" viewBox="0 0 26 26"><path d="M18 1 L25 4.5 V21.5 L18 25 L1 8 L4 6 L18 17 Z" fill="#9C6CDB"/><path d="M1 8 V18 L4 20 V6 Z" fill="#6A3BB4"/><path d="M18 1 L25 4.5 V21.5 L18 25 Z" fill="#B692F6"/><path d="M4 20 L18 9 V1 L1 18 Z" fill="#8251D0" opacity="0.85"/></svg>
<div class="a" style="left:440px;top:1078px;width:40px;height:2px;background:#76B9ED;"></div>
<div class="a" style="left:587px;top:1078px;width:40px;height:2px;background:#76B9ED;"></div>
<div class="a" style="left:685px;top:1078px;width:40px;height:2px;background:#76B9ED;"></div>
<div class="a" style="left:783px;top:1078px;width:40px;height:2px;background:#76B9ED;"></div>
<div class="a" style="left:832px;top:1078px;width:40px;height:2px;background:#76B9ED;"></div>
<div class="a" style="left:877px;top:1078px;width:48px;height:2px;background:#76B9ED;"></div>
<svg class="a" style="left:1500px;top:1046px;" width="28" height="26" viewBox="0 0 28 26"><defs><linearGradient id="sg" x1="0" y1="0" x2="1" y2="1"><stop offset="0" stop-color="#F8C62A"/><stop offset="1" stop-color="#F07810"/></linearGradient><linearGradient id="cg" x1="0" y1="0" x2="0" y2="1"><stop offset="0" stop-color="#A8C8F4"/><stop offset="1" stop-color="#E0ECFA"/></linearGradient></defs><circle cx="14" cy="14" r="10" fill="url(#sg)"/><path d="M2.5 10.7 C1.5 10.7 1.5 7.2 3.6 7.2 C4 4.5 6 3.2 8 3.6 C9 1.8 12 1.8 13 4 C15 4 15.5 6.5 14.2 7.5 C15 9 14.5 10.7 13 10.7 Z" fill="url(#cg)"/><path d="M12.8 22.7 C11.5 22.7 11.5 18.8 13.8 18.8 C14.2 16 16.5 14.6 18.5 15 C19.8 13.2 23 13.6 23.8 16 C26 16.2 26.5 19 25 20 C26.2 21 25.8 22.7 24.5 22.7 Z" fill="url(#cg)"/><circle cx="20.1" cy="7.9" r="5.8" fill="#D02A20"/><text x="20.3" y="11.6" text-anchor="middle" font-family="Liberation Sans" font-size="10" fill="#FFF">1</text></svg>
<div class="t" style="left:1534px;top:1051px;font-size:15px;line-height:20px;color:#FFFFFF;font-family:'Liberation Sans',sans-serif;transform-origin:0 0;transform:scaleX(0.8770);">32°C</div>
<div class="t" style="left:1572px;top:1051px;font-size:15px;line-height:20px;color:#FFFFFF;font-family:'Liberation Sans',sans-serif;transform-origin:0 0;transform:scaleX(0.9087);">Partly sunny</div>
<svg class="a" style="left:1670px;top:1053px;" width="14" height="9" viewBox="0 0 14 9"><path d="M0.8 8 L7 1.5 L13.2 8" fill="none" stroke="#FFF" stroke-width="1.3"/></svg>
<svg class="a" style="left:1692px;top:1054px;" width="18" height="11" viewBox="0 0 18 11"><path d="M2 10.5 C0 10.5 0 6.5 2.5 6.5 C3 3.5 6 2.5 8 4 C9.5 0.5 15 1 15 5.5 C17.5 5.5 18 10.5 15 10.5 Z" fill="#D8D8D8"/></svg>
<svg class="a" style="left:1716px;top:1051px;" width="18" height="17" viewBox="0 0 18 17"><rect x="3.5" y="1.5" width="14" height="9" fill="none" stroke="#FFF" stroke-width="1.1"/><path d="M10.5 10.5 V14 M6 15.5 H15 M0.8 3 V8 M0.8 3 H3" stroke="#FFF" stroke-width="1.1"/></svg>
<svg class="a" style="left:1740px;top:1051px;" width="18" height="17" viewBox="0 0 18 17"><path d="M1 6 H4 L8 2 V15 L4 11 H1 Z" fill="none" stroke="#FFF" stroke-width="1.1"/><path d="M10.5 6 C11.8 7.5 11.8 9.5 10.5 11 M13 4 C15 6.5 15 10.5 13 13 M15.5 2 C18.5 5.5 18.5 11.5 15.5 15" fill="none" stroke="#BBB" stroke-width="1.1"/></svg>
<div class="t" style="left:1767px;top:1042px;font-size:14px;line-height:20px;color:#FFFFFF;font-family:'Liberation Sans',sans-serif;transform-origin:0 0;transform:scaleX(0.7686);">ENG</div>
<div class="t" style="left:1773.5px;top:1059px;font-size:14px;line-height:20px;color:#FFFFFF;font-family:'Liberation Sans',sans-serif;transform-origin:0 0;transform:scaleX(0.8100);">IN</div>
<div class="t" style="left:1811px;top:1042px;font-size:14px;line-height:20px;color:#FFFFFF;font-family:'Liberation Sans',sans-serif;transform-origin:0 0;transform:scaleX(0.8121);">2:44 PM</div>
<div class="t" style="left:1803px;top:1059px;font-size:14px;line-height:20px;color:#FFFFFF;font-family:'Liberation Sans',sans-serif;transform-origin:0 0;transform:scaleX(0.8145);">23-08-2023</div>
<svg class="a" style="left:1878px;top:1050px;" width="18" height="19" viewBox="0 0 18 19"><path d="M0.8 0.8 H16.2 V12.5 H9 L5 16.5 V12.5 H0.8 Z" fill="#FFF"/><path d="M3.5 4 H13.5 M3.5 7 H13.5 M3.5 10 H10" stroke="#2B2723" stroke-width="1"/><circle cx="14.5" cy="15" r="3" fill="#2B2723" stroke="#FFF" stroke-width="1"/></svg>
<div class="a" style="left:1915px;top:1040px;width:1px;height:40px;background:#6E6A66;"></div>
<div class="t" style="left:9.5px;top:72px;line-height:14px;color:#2A2A2A;-webkit-text-stroke:0;transform-origin:0 0;transform:translateX(14px) rotate(90deg) scaleX(1.0118);">Toolbox</div>
<div class="t" style="left:9.5px;top:126px;line-height:14px;color:#2A2A2A;-webkit-text-stroke:0;transform-origin:0 0;transform:translateX(14px) rotate(90deg) scaleX(0.9396);">Server Explorer</div>
<div class="t" style="left:1895px;top:72px;line-height:14px;color:#2A2A2A;-webkit-text-stroke:0;transform-origin:0 0;transform:translateX(14px) rotate(90deg) scaleX(0.9777);">Solution Explorer</div>
<div class="t" style="left:1895px;top:174px;line-height:14px;color:#2A2A2A;-webkit-text-stroke:0;transform-origin:0 0;transform:translateX(14px) rotate(90deg) scaleX(0.9496);">Git Changes</div>
</body></html>
